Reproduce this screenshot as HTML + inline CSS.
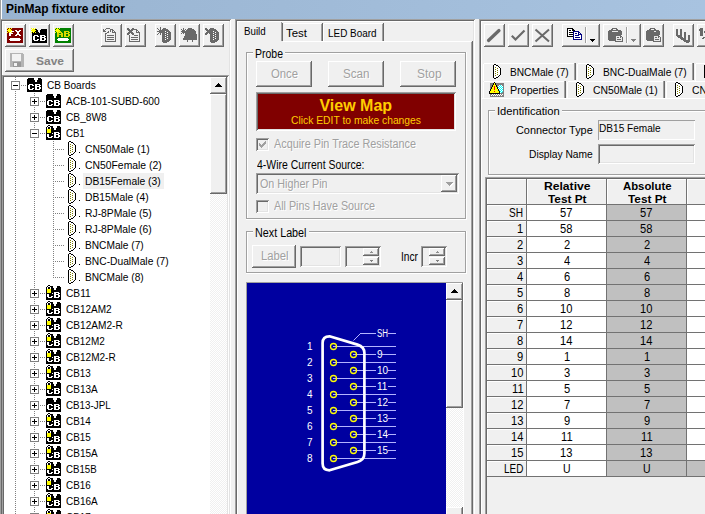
<!DOCTYPE html>
<html><head><meta charset="utf-8"><title>PinMap fixture editor</title><style>
html,body{margin:0;padding:0;}
body{width:705px;height:514px;overflow:hidden;background:#f0f0f0;position:relative;font-family:"Liberation Sans",sans-serif;font-size:11px;}
div,span,svg{position:absolute;box-sizing:border-box;}
.t{white-space:pre;line-height:1;color:#000;transform-origin:0 0;}
.sunk{box-shadow:inset 1px 1px 0 #a0a0a0, inset -1px -1px 0 #fff, inset 2px 2px 0 #696969, inset -2px -2px 0 #e3e3e3;}
.rais{box-shadow:inset -1px -1px 0 #696969, inset 1px 1px 0 #fff, inset -2px -2px 0 #a0a0a0, inset 2px 2px 0 #f0f0f0;}
.dis{color:#a0a0a0;text-shadow:1px 1px 0 #fff;}
</style></head><body>
<div style="left:0px;top:0px;width:705px;height:19px;background:linear-gradient(to right,#99b4d1,#a8c3e0);"></div>
<div style="left:0px;top:0px;width:1px;height:19px;background:#a0a0a0;"></div>
<div style="left:1px;top:0px;width:1px;height:19px;background:#fff;"></div>
<span class="t" style="top:3px;font-size:12px;font-weight:bold;transform:scaleX(0.9971);left:6px;">PinMap fixture editor</span>
<div class="sunk" style="left:0px;top:19px;width:231px;height:500px;"></div>
<div class="sunk" style="left:235px;top:19px;width:240px;height:500px;"></div>
<div class="sunk" style="left:479px;top:19px;width:240px;height:500px;"></div>
<div style="left:2px;top:21px;width:227px;height:1px;background:#fff;"></div>
<div style="left:2px;top:21px;width:1px;height:54px;background:#fff;"></div>
<div class="rais" style="left:5px;top:24px;width:21px;height:23px;"></div>
<div class="rais" style="left:29px;top:24px;width:21px;height:23px;"></div>
<div class="rais" style="left:53px;top:24px;width:21px;height:23px;"></div>
<div class="rais" style="left:101px;top:24px;width:21px;height:23px;"></div>
<div class="rais" style="left:125px;top:24px;width:21px;height:23px;"></div>
<div class="rais" style="left:155px;top:24px;width:21px;height:23px;"></div>
<div class="rais" style="left:179px;top:24px;width:21px;height:23px;"></div>
<div class="rais" style="left:203px;top:24px;width:21px;height:23px;"></div>
<div class="rais" style="left:5px;top:49px;width:69px;height:23px;"></div>
<span class="t" style="top:56px;font-size:11px;font-weight:bold;color:#838383;transform:scaleX(1.0899);left:36px;">Save</span>
<div class="sunk" style="left:2px;top:75px;width:227px;height:445px;background:#fff;"></div>
<div style="left:210px;top:77px;width:17px;height:440px;background:repeating-conic-gradient(#fff 0 25%,#f0f0f0 0 50%) 0 0/2px 2px;"></div>
<div class="rais" style="left:210px;top:77px;width:17px;height:17px;background:#f0f0f0;"></div>
<svg style="left:215px;top:83px;" width="7" height="4" viewBox="0 0 7 4" shape-rendering="crispEdges"><path d="M3 0h1v1h1v1h1v1h1v1h-7v-1h1v-1h1v-1h1z" fill="#000"/></svg>
<div class="rais" style="left:210px;top:94px;width:17px;height:100px;background:#f0f0f0;"></div>
<div style="left:15px;top:77px;width:1px;height:3px;background:repeating-linear-gradient(to bottom,#808080 0,#808080 1px,transparent 1px,transparent 2px);"></div>
<div style="left:15px;top:91px;width:1px;height:429px;background:repeating-linear-gradient(to bottom,#808080 0,#808080 1px,transparent 1px,transparent 2px);"></div>
<div style="left:34px;top:93px;width:1px;height:427px;background:repeating-linear-gradient(to bottom,#808080 0,#808080 1px,transparent 1px,transparent 2px);"></div>
<div style="left:53px;top:141px;width:1px;height:137px;background:repeating-linear-gradient(to bottom,#808080 0,#808080 1px,transparent 1px,transparent 2px);"></div>
<div style="left:21px;top:85px;width:5px;height:1px;background:repeating-linear-gradient(to right,#808080 0,#808080 1px,transparent 1px,transparent 2px);"></div>
<div style="left:11px;top:81px;width:9px;height:9px;background:#fff;border:1px solid #808080;"></div>
<div style="left:13px;top:85px;width:5px;height:1px;background:#000;"></div>
<svg style="left:27px;top:77px;" width="15" height="15" viewBox="0 0 15 15" shape-rendering="crispEdges"><path d="M1 1h6v1h-6zM11 1h3v1h-3zM0 2h7v1h-7zM11 2h4v1h-4zM0 3h8v1h-8zM10 3h5v1h-5zM0 4h8v1h-8zM10 4h5v1h-5zM0 5h15v1h-15zM0 6h15v1h-15zM0 7h2v1h-2zM6 7h2v1h-2zM13 7h2v1h-2zM0 8h1v1h-1zM3 8h2v1h-2zM7 8h1v1h-1zM10 8h2v1h-2zM14 8h1v1h-1zM0 9h1v1h-1zM3 9h5v1h-5zM13 9h2v1h-2zM0 10h1v1h-1zM3 10h5v1h-5zM10 10h2v1h-2zM14 10h1v1h-1zM0 11h1v1h-1zM3 11h2v1h-2zM7 11h1v1h-1zM10 11h2v1h-2zM14 11h1v1h-1zM0 12h2v1h-2zM6 12h2v1h-2zM13 12h2v1h-2zM0 13h15v1h-15zM0 14h15v1h-15z" fill="#000"/><path d="M2 7h4v1h-4zM8 7h5v1h-5zM1 8h2v1h-2zM5 8h2v1h-2zM8 8h2v1h-2zM12 8h2v1h-2zM1 9h2v1h-2zM8 9h5v1h-5zM1 10h2v1h-2zM8 10h2v1h-2zM12 10h2v1h-2zM1 11h2v1h-2zM5 11h2v1h-2zM8 11h2v1h-2zM12 11h2v1h-2zM2 12h4v1h-4zM8 12h5v1h-5z" fill="#fff"/></svg>
<span class="t" style="top:80px;font-size:11px;transform:scaleX(0.9156);left:47px;">CB Boards</span>
<div style="left:40px;top:101px;width:5px;height:1px;background:repeating-linear-gradient(to right,#808080 0,#808080 1px,transparent 1px,transparent 2px);"></div>
<div style="left:30px;top:97px;width:9px;height:9px;background:#fff;border:1px solid #808080;"></div>
<div style="left:32px;top:101px;width:5px;height:1px;background:#000;"></div>
<div style="left:34px;top:99px;width:1px;height:5px;background:#000;"></div>
<svg style="left:46px;top:93px;" width="15" height="15" viewBox="0 0 15 15" shape-rendering="crispEdges"><path d="M1 1h6v1h-6zM11 1h3v1h-3zM0 2h7v1h-7zM11 2h4v1h-4zM0 3h8v1h-8zM10 3h5v1h-5zM0 4h8v1h-8zM10 4h5v1h-5zM0 5h15v1h-15zM0 6h15v1h-15zM0 7h2v1h-2zM6 7h2v1h-2zM13 7h2v1h-2zM0 8h1v1h-1zM3 8h2v1h-2zM7 8h1v1h-1zM10 8h2v1h-2zM14 8h1v1h-1zM0 9h1v1h-1zM3 9h5v1h-5zM13 9h2v1h-2zM0 10h1v1h-1zM3 10h5v1h-5zM10 10h2v1h-2zM14 10h1v1h-1zM0 11h1v1h-1zM3 11h2v1h-2zM7 11h1v1h-1zM10 11h2v1h-2zM14 11h1v1h-1zM0 12h2v1h-2zM6 12h2v1h-2zM13 12h2v1h-2zM0 13h15v1h-15zM0 14h15v1h-15z" fill="#000"/><path d="M2 7h4v1h-4zM8 7h5v1h-5zM1 8h2v1h-2zM5 8h2v1h-2zM8 8h2v1h-2zM12 8h2v1h-2zM1 9h2v1h-2zM8 9h5v1h-5zM1 10h2v1h-2zM8 10h2v1h-2zM12 10h2v1h-2zM1 11h2v1h-2zM5 11h2v1h-2zM8 11h2v1h-2zM12 11h2v1h-2zM2 12h4v1h-4zM8 12h5v1h-5z" fill="#fff"/></svg>
<span class="t" style="top:96px;font-size:11px;transform:scaleX(0.9288);left:66px;">ACB-101-SUBD-600</span>
<div style="left:40px;top:117px;width:5px;height:1px;background:repeating-linear-gradient(to right,#808080 0,#808080 1px,transparent 1px,transparent 2px);"></div>
<div style="left:30px;top:113px;width:9px;height:9px;background:#fff;border:1px solid #808080;"></div>
<div style="left:32px;top:117px;width:5px;height:1px;background:#000;"></div>
<div style="left:34px;top:115px;width:1px;height:5px;background:#000;"></div>
<svg style="left:46px;top:109px;" width="15" height="15" viewBox="0 0 15 15" shape-rendering="crispEdges"><path d="M1 1h6v1h-6zM11 1h3v1h-3zM0 2h7v1h-7zM11 2h4v1h-4zM0 3h8v1h-8zM10 3h5v1h-5zM0 4h8v1h-8zM10 4h5v1h-5zM0 5h15v1h-15zM0 6h15v1h-15zM0 7h2v1h-2zM6 7h2v1h-2zM13 7h2v1h-2zM0 8h1v1h-1zM3 8h2v1h-2zM7 8h1v1h-1zM10 8h2v1h-2zM14 8h1v1h-1zM0 9h1v1h-1zM3 9h5v1h-5zM13 9h2v1h-2zM0 10h1v1h-1zM3 10h5v1h-5zM10 10h2v1h-2zM14 10h1v1h-1zM0 11h1v1h-1zM3 11h2v1h-2zM7 11h1v1h-1zM10 11h2v1h-2zM14 11h1v1h-1zM0 12h2v1h-2zM6 12h2v1h-2zM13 12h2v1h-2zM0 13h15v1h-15zM0 14h15v1h-15z" fill="#000"/><path d="M2 7h4v1h-4zM8 7h5v1h-5zM1 8h2v1h-2zM5 8h2v1h-2zM8 8h2v1h-2zM12 8h2v1h-2zM1 9h2v1h-2zM8 9h5v1h-5zM1 10h2v1h-2zM8 10h2v1h-2zM12 10h2v1h-2zM1 11h2v1h-2zM5 11h2v1h-2zM8 11h2v1h-2zM12 11h2v1h-2zM2 12h4v1h-4zM8 12h5v1h-5z" fill="#fff"/></svg>
<span class="t" style="top:112px;font-size:11px;transform:scaleX(0.9246);left:66px;">CB_8W8</span>
<div style="left:40px;top:133px;width:5px;height:1px;background:repeating-linear-gradient(to right,#808080 0,#808080 1px,transparent 1px,transparent 2px);"></div>
<div style="left:30px;top:129px;width:9px;height:9px;background:#fff;border:1px solid #808080;"></div>
<div style="left:32px;top:133px;width:5px;height:1px;background:#000;"></div>
<svg style="left:46px;top:125px;" width="15" height="15" viewBox="0 0 15 15" shape-rendering="crispEdges"><path d="M2 0h2v1h-2zM1 1h1v1h-1zM4 1h3v1h-3zM11 1h3v1h-3zM0 2h1v1h-1zM2 2h2v1h-2zM5 2h2v1h-2zM11 2h4v1h-4zM0 3h1v1h-1zM2 3h2v1h-2zM5 3h3v1h-3zM10 3h5v1h-5zM0 4h1v1h-1zM5 4h3v1h-3zM10 4h5v1h-5zM0 5h1v1h-1zM5 5h10v1h-10zM0 6h1v1h-1zM5 6h10v1h-10zM0 7h1v1h-1zM5 7h3v1h-3zM13 7h2v1h-2zM0 8h6v1h-6zM7 8h1v1h-1zM10 8h2v1h-2zM14 8h1v1h-1zM0 9h1v1h-1zM3 9h5v1h-5zM13 9h2v1h-2zM0 10h1v1h-1zM3 10h5v1h-5zM10 10h2v1h-2zM14 10h1v1h-1zM0 11h1v1h-1zM3 11h2v1h-2zM7 11h1v1h-1zM10 11h2v1h-2zM14 11h1v1h-1zM0 12h2v1h-2zM6 12h2v1h-2zM13 12h2v1h-2zM0 13h15v1h-15zM0 14h15v1h-15z" fill="#000"/><path d="M2 1h2v1h-2zM1 2h1v1h-1zM4 2h1v1h-1zM1 3h1v1h-1zM4 3h1v1h-1zM8 7h5v1h-5zM6 8h1v1h-1zM8 8h2v1h-2zM12 8h2v1h-2zM1 9h2v1h-2zM8 9h5v1h-5zM1 10h2v1h-2zM8 10h2v1h-2zM12 10h2v1h-2zM1 11h2v1h-2zM5 11h2v1h-2zM8 11h2v1h-2zM12 11h2v1h-2zM2 12h4v1h-4zM8 12h5v1h-5z" fill="#fff"/><path d="M1 4h4v1h-4zM1 5h4v1h-4zM1 6h4v1h-4zM1 7h4v1h-4z" fill="#ffff00"/></svg>
<span class="t" style="top:128px;font-size:11px;transform:scaleX(0.8739);left:66px;">CB1</span>
<div style="left:55px;top:149px;width:9px;height:1px;background:repeating-linear-gradient(to right,#808080 0,#808080 1px,transparent 1px,transparent 2px);"></div>
<svg style="left:68px;top:141px;" width="8" height="15" viewBox="0 0 8 15" shape-rendering="crispEdges"><path d="M1 0h2v1h-2zM0 1h1v1h-1zM3 1h2v1h-2zM0 2h1v1h-1zM5 2h1v1h-1zM0 3h1v1h-1zM6 3h1v1h-1zM0 4h1v1h-1zM7 4h1v1h-1zM0 5h1v1h-1zM7 5h1v1h-1zM0 6h1v1h-1zM7 6h1v1h-1zM0 7h1v1h-1zM7 7h1v1h-1zM0 8h1v1h-1zM7 8h1v1h-1zM0 9h1v1h-1zM7 9h1v1h-1zM0 10h1v1h-1zM7 10h1v1h-1zM0 11h1v1h-1zM6 11h1v1h-1zM0 12h1v1h-1zM5 12h1v1h-1zM0 13h1v1h-1zM3 13h2v1h-2zM1 14h2v1h-2z" fill="#000"/><path d="M1 1h2v1h-2zM1 2h4v1h-4zM1 3h1v1h-1zM3 3h3v1h-3zM1 4h3v1h-3zM5 4h2v1h-2zM1 5h1v1h-1zM3 5h4v1h-4zM1 6h3v1h-3zM5 6h2v1h-2zM1 7h1v1h-1zM3 7h4v1h-4zM1 8h3v1h-3zM5 8h2v1h-2zM1 9h1v1h-1zM3 9h4v1h-4zM1 10h3v1h-3zM5 10h2v1h-2zM1 11h1v1h-1zM3 11h3v1h-3zM1 12h4v1h-4zM1 13h2v1h-2z" fill="#fff"/><path d="M2 3h1v1h-1zM4 4h1v1h-1zM2 5h1v1h-1zM4 6h1v1h-1zM2 7h1v1h-1zM4 8h1v1h-1zM2 9h1v1h-1zM4 10h1v1h-1zM2 11h1v1h-1z" fill="#808000"/></svg>
<div style="left:79px;top:152px;width:1px;height:1px;background:#000;"></div>
<span class="t" style="top:144px;font-size:11px;transform:scaleX(0.9450);left:85px;">CN50Male (1)</span>
<div style="left:55px;top:165px;width:9px;height:1px;background:repeating-linear-gradient(to right,#808080 0,#808080 1px,transparent 1px,transparent 2px);"></div>
<svg style="left:68px;top:157px;" width="8" height="15" viewBox="0 0 8 15" shape-rendering="crispEdges"><path d="M1 0h2v1h-2zM0 1h1v1h-1zM3 1h2v1h-2zM0 2h1v1h-1zM5 2h1v1h-1zM0 3h1v1h-1zM6 3h1v1h-1zM0 4h1v1h-1zM7 4h1v1h-1zM0 5h1v1h-1zM7 5h1v1h-1zM0 6h1v1h-1zM7 6h1v1h-1zM0 7h1v1h-1zM7 7h1v1h-1zM0 8h1v1h-1zM7 8h1v1h-1zM0 9h1v1h-1zM7 9h1v1h-1zM0 10h1v1h-1zM7 10h1v1h-1zM0 11h1v1h-1zM6 11h1v1h-1zM0 12h1v1h-1zM5 12h1v1h-1zM0 13h1v1h-1zM3 13h2v1h-2zM1 14h2v1h-2z" fill="#000"/><path d="M1 1h2v1h-2zM1 2h4v1h-4zM1 3h1v1h-1zM3 3h3v1h-3zM1 4h3v1h-3zM5 4h2v1h-2zM1 5h1v1h-1zM3 5h4v1h-4zM1 6h3v1h-3zM5 6h2v1h-2zM1 7h1v1h-1zM3 7h4v1h-4zM1 8h3v1h-3zM5 8h2v1h-2zM1 9h1v1h-1zM3 9h4v1h-4zM1 10h3v1h-3zM5 10h2v1h-2zM1 11h1v1h-1zM3 11h3v1h-3zM1 12h4v1h-4zM1 13h2v1h-2z" fill="#fff"/><path d="M2 3h1v1h-1zM4 4h1v1h-1zM2 5h1v1h-1zM4 6h1v1h-1zM2 7h1v1h-1zM4 8h1v1h-1zM2 9h1v1h-1zM4 10h1v1h-1zM2 11h1v1h-1z" fill="#808000"/></svg>
<div style="left:79px;top:168px;width:1px;height:1px;background:#000;"></div>
<span class="t" style="top:160px;font-size:11px;transform:scaleX(0.9434);left:85px;">CN50Female (2)</span>
<div style="left:55px;top:181px;width:9px;height:1px;background:repeating-linear-gradient(to right,#808080 0,#808080 1px,transparent 1px,transparent 2px);"></div>
<svg style="left:68px;top:173px;" width="8" height="15" viewBox="0 0 8 15" shape-rendering="crispEdges"><path d="M1 0h2v1h-2zM0 1h1v1h-1zM3 1h2v1h-2zM0 2h1v1h-1zM5 2h1v1h-1zM0 3h1v1h-1zM6 3h1v1h-1zM0 4h1v1h-1zM7 4h1v1h-1zM0 5h1v1h-1zM7 5h1v1h-1zM0 6h1v1h-1zM7 6h1v1h-1zM0 7h1v1h-1zM7 7h1v1h-1zM0 8h1v1h-1zM7 8h1v1h-1zM0 9h1v1h-1zM7 9h1v1h-1zM0 10h1v1h-1zM7 10h1v1h-1zM0 11h1v1h-1zM6 11h1v1h-1zM0 12h1v1h-1zM5 12h1v1h-1zM0 13h1v1h-1zM3 13h2v1h-2zM1 14h2v1h-2z" fill="#000"/><path d="M1 1h2v1h-2zM1 2h4v1h-4zM1 3h1v1h-1zM3 3h3v1h-3zM1 4h3v1h-3zM5 4h2v1h-2zM1 5h1v1h-1zM3 5h4v1h-4zM1 6h3v1h-3zM5 6h2v1h-2zM1 7h1v1h-1zM3 7h4v1h-4zM1 8h3v1h-3zM5 8h2v1h-2zM1 9h1v1h-1zM3 9h4v1h-4zM1 10h3v1h-3zM5 10h2v1h-2zM1 11h1v1h-1zM3 11h3v1h-3zM1 12h4v1h-4zM1 13h2v1h-2z" fill="#fff"/><path d="M2 3h1v1h-1zM4 4h1v1h-1zM2 5h1v1h-1zM4 6h1v1h-1zM2 7h1v1h-1zM4 8h1v1h-1zM2 9h1v1h-1zM4 10h1v1h-1zM2 11h1v1h-1z" fill="#808000"/></svg>
<div style="left:79px;top:184px;width:1px;height:1px;background:#000;"></div>
<div style="left:83px;top:173px;width:81px;height:16px;background:#f0f0f0;"></div>
<span class="t" style="top:176px;font-size:11px;transform:scaleX(0.9381);left:85px;">DB15Female (3)</span>
<div style="left:55px;top:197px;width:9px;height:1px;background:repeating-linear-gradient(to right,#808080 0,#808080 1px,transparent 1px,transparent 2px);"></div>
<svg style="left:68px;top:189px;" width="8" height="15" viewBox="0 0 8 15" shape-rendering="crispEdges"><path d="M1 0h2v1h-2zM0 1h1v1h-1zM3 1h2v1h-2zM0 2h1v1h-1zM5 2h1v1h-1zM0 3h1v1h-1zM6 3h1v1h-1zM0 4h1v1h-1zM7 4h1v1h-1zM0 5h1v1h-1zM7 5h1v1h-1zM0 6h1v1h-1zM7 6h1v1h-1zM0 7h1v1h-1zM7 7h1v1h-1zM0 8h1v1h-1zM7 8h1v1h-1zM0 9h1v1h-1zM7 9h1v1h-1zM0 10h1v1h-1zM7 10h1v1h-1zM0 11h1v1h-1zM6 11h1v1h-1zM0 12h1v1h-1zM5 12h1v1h-1zM0 13h1v1h-1zM3 13h2v1h-2zM1 14h2v1h-2z" fill="#000"/><path d="M1 1h2v1h-2zM1 2h4v1h-4zM1 3h1v1h-1zM3 3h3v1h-3zM1 4h3v1h-3zM5 4h2v1h-2zM1 5h1v1h-1zM3 5h4v1h-4zM1 6h3v1h-3zM5 6h2v1h-2zM1 7h1v1h-1zM3 7h4v1h-4zM1 8h3v1h-3zM5 8h2v1h-2zM1 9h1v1h-1zM3 9h4v1h-4zM1 10h3v1h-3zM5 10h2v1h-2zM1 11h1v1h-1zM3 11h3v1h-3zM1 12h4v1h-4zM1 13h2v1h-2z" fill="#fff"/><path d="M2 3h1v1h-1zM4 4h1v1h-1zM2 5h1v1h-1zM4 6h1v1h-1zM2 7h1v1h-1zM4 8h1v1h-1zM2 9h1v1h-1zM4 10h1v1h-1zM2 11h1v1h-1z" fill="#808000"/></svg>
<div style="left:79px;top:200px;width:1px;height:1px;background:#000;"></div>
<span class="t" style="top:192px;font-size:11px;transform:scaleX(0.9387);left:85px;">DB15Male (4)</span>
<div style="left:55px;top:213px;width:9px;height:1px;background:repeating-linear-gradient(to right,#808080 0,#808080 1px,transparent 1px,transparent 2px);"></div>
<svg style="left:68px;top:205px;" width="8" height="15" viewBox="0 0 8 15" shape-rendering="crispEdges"><path d="M1 0h2v1h-2zM0 1h1v1h-1zM3 1h2v1h-2zM0 2h1v1h-1zM5 2h1v1h-1zM0 3h1v1h-1zM6 3h1v1h-1zM0 4h1v1h-1zM7 4h1v1h-1zM0 5h1v1h-1zM7 5h1v1h-1zM0 6h1v1h-1zM7 6h1v1h-1zM0 7h1v1h-1zM7 7h1v1h-1zM0 8h1v1h-1zM7 8h1v1h-1zM0 9h1v1h-1zM7 9h1v1h-1zM0 10h1v1h-1zM7 10h1v1h-1zM0 11h1v1h-1zM6 11h1v1h-1zM0 12h1v1h-1zM5 12h1v1h-1zM0 13h1v1h-1zM3 13h2v1h-2zM1 14h2v1h-2z" fill="#000"/><path d="M1 1h2v1h-2zM1 2h4v1h-4zM1 3h1v1h-1zM3 3h3v1h-3zM1 4h3v1h-3zM5 4h2v1h-2zM1 5h1v1h-1zM3 5h4v1h-4zM1 6h3v1h-3zM5 6h2v1h-2zM1 7h1v1h-1zM3 7h4v1h-4zM1 8h3v1h-3zM5 8h2v1h-2zM1 9h1v1h-1zM3 9h4v1h-4zM1 10h3v1h-3zM5 10h2v1h-2zM1 11h1v1h-1zM3 11h3v1h-3zM1 12h4v1h-4zM1 13h2v1h-2z" fill="#fff"/><path d="M2 3h1v1h-1zM4 4h1v1h-1zM2 5h1v1h-1zM4 6h1v1h-1zM2 7h1v1h-1zM4 8h1v1h-1zM2 9h1v1h-1zM4 10h1v1h-1zM2 11h1v1h-1z" fill="#808000"/></svg>
<div style="left:79px;top:216px;width:1px;height:1px;background:#000;"></div>
<span class="t" style="top:208px;font-size:11px;transform:scaleX(0.9407);left:85px;">RJ-8PMale (5)</span>
<div style="left:55px;top:229px;width:9px;height:1px;background:repeating-linear-gradient(to right,#808080 0,#808080 1px,transparent 1px,transparent 2px);"></div>
<svg style="left:68px;top:221px;" width="8" height="15" viewBox="0 0 8 15" shape-rendering="crispEdges"><path d="M1 0h2v1h-2zM0 1h1v1h-1zM3 1h2v1h-2zM0 2h1v1h-1zM5 2h1v1h-1zM0 3h1v1h-1zM6 3h1v1h-1zM0 4h1v1h-1zM7 4h1v1h-1zM0 5h1v1h-1zM7 5h1v1h-1zM0 6h1v1h-1zM7 6h1v1h-1zM0 7h1v1h-1zM7 7h1v1h-1zM0 8h1v1h-1zM7 8h1v1h-1zM0 9h1v1h-1zM7 9h1v1h-1zM0 10h1v1h-1zM7 10h1v1h-1zM0 11h1v1h-1zM6 11h1v1h-1zM0 12h1v1h-1zM5 12h1v1h-1zM0 13h1v1h-1zM3 13h2v1h-2zM1 14h2v1h-2z" fill="#000"/><path d="M1 1h2v1h-2zM1 2h4v1h-4zM1 3h1v1h-1zM3 3h3v1h-3zM1 4h3v1h-3zM5 4h2v1h-2zM1 5h1v1h-1zM3 5h4v1h-4zM1 6h3v1h-3zM5 6h2v1h-2zM1 7h1v1h-1zM3 7h4v1h-4zM1 8h3v1h-3zM5 8h2v1h-2zM1 9h1v1h-1zM3 9h4v1h-4zM1 10h3v1h-3zM5 10h2v1h-2zM1 11h1v1h-1zM3 11h3v1h-3zM1 12h4v1h-4zM1 13h2v1h-2z" fill="#fff"/><path d="M2 3h1v1h-1zM4 4h1v1h-1zM2 5h1v1h-1zM4 6h1v1h-1zM2 7h1v1h-1zM4 8h1v1h-1zM2 9h1v1h-1zM4 10h1v1h-1zM2 11h1v1h-1z" fill="#808000"/></svg>
<div style="left:79px;top:232px;width:1px;height:1px;background:#000;"></div>
<span class="t" style="top:224px;font-size:11px;transform:scaleX(0.9407);left:85px;">RJ-8PMale (6)</span>
<div style="left:55px;top:245px;width:9px;height:1px;background:repeating-linear-gradient(to right,#808080 0,#808080 1px,transparent 1px,transparent 2px);"></div>
<svg style="left:68px;top:237px;" width="8" height="15" viewBox="0 0 8 15" shape-rendering="crispEdges"><path d="M1 0h2v1h-2zM0 1h1v1h-1zM3 1h2v1h-2zM0 2h1v1h-1zM5 2h1v1h-1zM0 3h1v1h-1zM6 3h1v1h-1zM0 4h1v1h-1zM7 4h1v1h-1zM0 5h1v1h-1zM7 5h1v1h-1zM0 6h1v1h-1zM7 6h1v1h-1zM0 7h1v1h-1zM7 7h1v1h-1zM0 8h1v1h-1zM7 8h1v1h-1zM0 9h1v1h-1zM7 9h1v1h-1zM0 10h1v1h-1zM7 10h1v1h-1zM0 11h1v1h-1zM6 11h1v1h-1zM0 12h1v1h-1zM5 12h1v1h-1zM0 13h1v1h-1zM3 13h2v1h-2zM1 14h2v1h-2z" fill="#000"/><path d="M1 1h2v1h-2zM1 2h4v1h-4zM1 3h1v1h-1zM3 3h3v1h-3zM1 4h3v1h-3zM5 4h2v1h-2zM1 5h1v1h-1zM3 5h4v1h-4zM1 6h3v1h-3zM5 6h2v1h-2zM1 7h1v1h-1zM3 7h4v1h-4zM1 8h3v1h-3zM5 8h2v1h-2zM1 9h1v1h-1zM3 9h4v1h-4zM1 10h3v1h-3zM5 10h2v1h-2zM1 11h1v1h-1zM3 11h3v1h-3zM1 12h4v1h-4zM1 13h2v1h-2z" fill="#fff"/><path d="M2 3h1v1h-1zM4 4h1v1h-1zM2 5h1v1h-1zM4 6h1v1h-1zM2 7h1v1h-1zM4 8h1v1h-1zM2 9h1v1h-1zM4 10h1v1h-1zM2 11h1v1h-1z" fill="#808000"/></svg>
<div style="left:79px;top:248px;width:1px;height:1px;background:#000;"></div>
<span class="t" style="top:240px;font-size:11px;transform:scaleX(0.9234);left:85px;">BNCMale (7)</span>
<div style="left:55px;top:261px;width:9px;height:1px;background:repeating-linear-gradient(to right,#808080 0,#808080 1px,transparent 1px,transparent 2px);"></div>
<svg style="left:68px;top:253px;" width="8" height="15" viewBox="0 0 8 15" shape-rendering="crispEdges"><path d="M1 0h2v1h-2zM0 1h1v1h-1zM3 1h2v1h-2zM0 2h1v1h-1zM5 2h1v1h-1zM0 3h1v1h-1zM6 3h1v1h-1zM0 4h1v1h-1zM7 4h1v1h-1zM0 5h1v1h-1zM7 5h1v1h-1zM0 6h1v1h-1zM7 6h1v1h-1zM0 7h1v1h-1zM7 7h1v1h-1zM0 8h1v1h-1zM7 8h1v1h-1zM0 9h1v1h-1zM7 9h1v1h-1zM0 10h1v1h-1zM7 10h1v1h-1zM0 11h1v1h-1zM6 11h1v1h-1zM0 12h1v1h-1zM5 12h1v1h-1zM0 13h1v1h-1zM3 13h2v1h-2zM1 14h2v1h-2z" fill="#000"/><path d="M1 1h2v1h-2zM1 2h4v1h-4zM1 3h1v1h-1zM3 3h3v1h-3zM1 4h3v1h-3zM5 4h2v1h-2zM1 5h1v1h-1zM3 5h4v1h-4zM1 6h3v1h-3zM5 6h2v1h-2zM1 7h1v1h-1zM3 7h4v1h-4zM1 8h3v1h-3zM5 8h2v1h-2zM1 9h1v1h-1zM3 9h4v1h-4zM1 10h3v1h-3zM5 10h2v1h-2zM1 11h1v1h-1zM3 11h3v1h-3zM1 12h4v1h-4zM1 13h2v1h-2z" fill="#fff"/><path d="M2 3h1v1h-1zM4 4h1v1h-1zM2 5h1v1h-1zM4 6h1v1h-1zM2 7h1v1h-1zM4 8h1v1h-1zM2 9h1v1h-1zM4 10h1v1h-1zM2 11h1v1h-1z" fill="#808000"/></svg>
<div style="left:79px;top:264px;width:1px;height:1px;background:#000;"></div>
<span class="t" style="top:256px;font-size:11px;transform:scaleX(0.9315);left:85px;">BNC-DualMale (7)</span>
<div style="left:55px;top:277px;width:9px;height:1px;background:repeating-linear-gradient(to right,#808080 0,#808080 1px,transparent 1px,transparent 2px);"></div>
<svg style="left:68px;top:269px;" width="8" height="15" viewBox="0 0 8 15" shape-rendering="crispEdges"><path d="M1 0h2v1h-2zM0 1h1v1h-1zM3 1h2v1h-2zM0 2h1v1h-1zM5 2h1v1h-1zM0 3h1v1h-1zM6 3h1v1h-1zM0 4h1v1h-1zM7 4h1v1h-1zM0 5h1v1h-1zM7 5h1v1h-1zM0 6h1v1h-1zM7 6h1v1h-1zM0 7h1v1h-1zM7 7h1v1h-1zM0 8h1v1h-1zM7 8h1v1h-1zM0 9h1v1h-1zM7 9h1v1h-1zM0 10h1v1h-1zM7 10h1v1h-1zM0 11h1v1h-1zM6 11h1v1h-1zM0 12h1v1h-1zM5 12h1v1h-1zM0 13h1v1h-1zM3 13h2v1h-2zM1 14h2v1h-2z" fill="#000"/><path d="M1 1h2v1h-2zM1 2h4v1h-4zM1 3h1v1h-1zM3 3h3v1h-3zM1 4h3v1h-3zM5 4h2v1h-2zM1 5h1v1h-1zM3 5h4v1h-4zM1 6h3v1h-3zM5 6h2v1h-2zM1 7h1v1h-1zM3 7h4v1h-4zM1 8h3v1h-3zM5 8h2v1h-2zM1 9h1v1h-1zM3 9h4v1h-4zM1 10h3v1h-3zM5 10h2v1h-2zM1 11h1v1h-1zM3 11h3v1h-3zM1 12h4v1h-4zM1 13h2v1h-2z" fill="#fff"/><path d="M2 3h1v1h-1zM4 4h1v1h-1zM2 5h1v1h-1zM4 6h1v1h-1zM2 7h1v1h-1zM4 8h1v1h-1zM2 9h1v1h-1zM4 10h1v1h-1zM2 11h1v1h-1z" fill="#808000"/></svg>
<div style="left:79px;top:280px;width:1px;height:1px;background:#000;"></div>
<span class="t" style="top:272px;font-size:11px;transform:scaleX(0.9234);left:85px;">BNCMale (8)</span>
<div style="left:40px;top:293px;width:5px;height:1px;background:repeating-linear-gradient(to right,#808080 0,#808080 1px,transparent 1px,transparent 2px);"></div>
<div style="left:30px;top:289px;width:9px;height:9px;background:#fff;border:1px solid #808080;"></div>
<div style="left:32px;top:293px;width:5px;height:1px;background:#000;"></div>
<div style="left:34px;top:291px;width:1px;height:5px;background:#000;"></div>
<svg style="left:46px;top:285px;" width="15" height="15" viewBox="0 0 15 15" shape-rendering="crispEdges"><path d="M2 0h2v1h-2zM1 1h1v1h-1zM4 1h3v1h-3zM11 1h3v1h-3zM0 2h1v1h-1zM2 2h2v1h-2zM5 2h2v1h-2zM11 2h4v1h-4zM0 3h1v1h-1zM2 3h2v1h-2zM5 3h3v1h-3zM10 3h5v1h-5zM0 4h1v1h-1zM5 4h3v1h-3zM10 4h5v1h-5zM0 5h1v1h-1zM5 5h10v1h-10zM0 6h1v1h-1zM5 6h10v1h-10zM0 7h1v1h-1zM5 7h3v1h-3zM13 7h2v1h-2zM0 8h6v1h-6zM7 8h1v1h-1zM10 8h2v1h-2zM14 8h1v1h-1zM0 9h1v1h-1zM3 9h5v1h-5zM13 9h2v1h-2zM0 10h1v1h-1zM3 10h5v1h-5zM10 10h2v1h-2zM14 10h1v1h-1zM0 11h1v1h-1zM3 11h2v1h-2zM7 11h1v1h-1zM10 11h2v1h-2zM14 11h1v1h-1zM0 12h2v1h-2zM6 12h2v1h-2zM13 12h2v1h-2zM0 13h15v1h-15zM0 14h15v1h-15z" fill="#000"/><path d="M2 1h2v1h-2zM1 2h1v1h-1zM4 2h1v1h-1zM1 3h1v1h-1zM4 3h1v1h-1zM8 7h5v1h-5zM6 8h1v1h-1zM8 8h2v1h-2zM12 8h2v1h-2zM1 9h2v1h-2zM8 9h5v1h-5zM1 10h2v1h-2zM8 10h2v1h-2zM12 10h2v1h-2zM1 11h2v1h-2zM5 11h2v1h-2zM8 11h2v1h-2zM12 11h2v1h-2zM2 12h4v1h-4zM8 12h5v1h-5z" fill="#fff"/><path d="M1 4h4v1h-4zM1 5h4v1h-4zM1 6h4v1h-4zM1 7h4v1h-4z" fill="#ffff00"/></svg>
<span class="t" style="top:288px;font-size:11px;transform:scaleX(0.9251);left:66px;">CB11</span>
<div style="left:40px;top:309px;width:5px;height:1px;background:repeating-linear-gradient(to right,#808080 0,#808080 1px,transparent 1px,transparent 2px);"></div>
<div style="left:30px;top:305px;width:9px;height:9px;background:#fff;border:1px solid #808080;"></div>
<div style="left:32px;top:309px;width:5px;height:1px;background:#000;"></div>
<div style="left:34px;top:307px;width:1px;height:5px;background:#000;"></div>
<svg style="left:46px;top:301px;" width="15" height="15" viewBox="0 0 15 15" shape-rendering="crispEdges"><path d="M2 0h2v1h-2zM1 1h1v1h-1zM4 1h3v1h-3zM11 1h3v1h-3zM0 2h1v1h-1zM2 2h2v1h-2zM5 2h2v1h-2zM11 2h4v1h-4zM0 3h1v1h-1zM2 3h2v1h-2zM5 3h3v1h-3zM10 3h5v1h-5zM0 4h1v1h-1zM5 4h3v1h-3zM10 4h5v1h-5zM0 5h1v1h-1zM5 5h10v1h-10zM0 6h1v1h-1zM5 6h10v1h-10zM0 7h1v1h-1zM5 7h3v1h-3zM13 7h2v1h-2zM0 8h6v1h-6zM7 8h1v1h-1zM10 8h2v1h-2zM14 8h1v1h-1zM0 9h1v1h-1zM3 9h5v1h-5zM13 9h2v1h-2zM0 10h1v1h-1zM3 10h5v1h-5zM10 10h2v1h-2zM14 10h1v1h-1zM0 11h1v1h-1zM3 11h2v1h-2zM7 11h1v1h-1zM10 11h2v1h-2zM14 11h1v1h-1zM0 12h2v1h-2zM6 12h2v1h-2zM13 12h2v1h-2zM0 13h15v1h-15zM0 14h15v1h-15z" fill="#000"/><path d="M2 1h2v1h-2zM1 2h1v1h-1zM4 2h1v1h-1zM1 3h1v1h-1zM4 3h1v1h-1zM8 7h5v1h-5zM6 8h1v1h-1zM8 8h2v1h-2zM12 8h2v1h-2zM1 9h2v1h-2zM8 9h5v1h-5zM1 10h2v1h-2zM8 10h2v1h-2zM12 10h2v1h-2zM1 11h2v1h-2zM5 11h2v1h-2zM8 11h2v1h-2zM12 11h2v1h-2zM2 12h4v1h-4zM8 12h5v1h-5z" fill="#fff"/><path d="M1 4h4v1h-4zM1 5h4v1h-4zM1 6h4v1h-4zM1 7h4v1h-4z" fill="#ffff00"/></svg>
<span class="t" style="top:304px;font-size:11px;transform:scaleX(0.9115);left:66px;">CB12AM2</span>
<div style="left:40px;top:325px;width:5px;height:1px;background:repeating-linear-gradient(to right,#808080 0,#808080 1px,transparent 1px,transparent 2px);"></div>
<div style="left:30px;top:321px;width:9px;height:9px;background:#fff;border:1px solid #808080;"></div>
<div style="left:32px;top:325px;width:5px;height:1px;background:#000;"></div>
<div style="left:34px;top:323px;width:1px;height:5px;background:#000;"></div>
<svg style="left:46px;top:317px;" width="15" height="15" viewBox="0 0 15 15" shape-rendering="crispEdges"><path d="M2 0h2v1h-2zM1 1h1v1h-1zM4 1h3v1h-3zM11 1h3v1h-3zM0 2h1v1h-1zM2 2h2v1h-2zM5 2h2v1h-2zM11 2h4v1h-4zM0 3h1v1h-1zM2 3h2v1h-2zM5 3h3v1h-3zM10 3h5v1h-5zM0 4h1v1h-1zM5 4h3v1h-3zM10 4h5v1h-5zM0 5h1v1h-1zM5 5h10v1h-10zM0 6h1v1h-1zM5 6h10v1h-10zM0 7h1v1h-1zM5 7h3v1h-3zM13 7h2v1h-2zM0 8h6v1h-6zM7 8h1v1h-1zM10 8h2v1h-2zM14 8h1v1h-1zM0 9h1v1h-1zM3 9h5v1h-5zM13 9h2v1h-2zM0 10h1v1h-1zM3 10h5v1h-5zM10 10h2v1h-2zM14 10h1v1h-1zM0 11h1v1h-1zM3 11h2v1h-2zM7 11h1v1h-1zM10 11h2v1h-2zM14 11h1v1h-1zM0 12h2v1h-2zM6 12h2v1h-2zM13 12h2v1h-2zM0 13h15v1h-15zM0 14h15v1h-15z" fill="#000"/><path d="M2 1h2v1h-2zM1 2h1v1h-1zM4 2h1v1h-1zM1 3h1v1h-1zM4 3h1v1h-1zM8 7h5v1h-5zM6 8h1v1h-1zM8 8h2v1h-2zM12 8h2v1h-2zM1 9h2v1h-2zM8 9h5v1h-5zM1 10h2v1h-2zM8 10h2v1h-2zM12 10h2v1h-2zM1 11h2v1h-2zM5 11h2v1h-2zM8 11h2v1h-2zM12 11h2v1h-2zM2 12h4v1h-4zM8 12h5v1h-5z" fill="#fff"/><path d="M1 4h4v1h-4zM1 5h4v1h-4zM1 6h4v1h-4zM1 7h4v1h-4z" fill="#ffff00"/></svg>
<span class="t" style="top:320px;font-size:11px;transform:scaleX(0.9183);left:66px;">CB12AM2-R</span>
<div style="left:40px;top:341px;width:5px;height:1px;background:repeating-linear-gradient(to right,#808080 0,#808080 1px,transparent 1px,transparent 2px);"></div>
<div style="left:30px;top:337px;width:9px;height:9px;background:#fff;border:1px solid #808080;"></div>
<div style="left:32px;top:341px;width:5px;height:1px;background:#000;"></div>
<div style="left:34px;top:339px;width:1px;height:5px;background:#000;"></div>
<svg style="left:46px;top:333px;" width="15" height="15" viewBox="0 0 15 15" shape-rendering="crispEdges"><path d="M2 0h2v1h-2zM1 1h1v1h-1zM4 1h3v1h-3zM11 1h3v1h-3zM0 2h1v1h-1zM2 2h2v1h-2zM5 2h2v1h-2zM11 2h4v1h-4zM0 3h1v1h-1zM2 3h2v1h-2zM5 3h3v1h-3zM10 3h5v1h-5zM0 4h1v1h-1zM5 4h3v1h-3zM10 4h5v1h-5zM0 5h1v1h-1zM5 5h10v1h-10zM0 6h1v1h-1zM5 6h10v1h-10zM0 7h1v1h-1zM5 7h3v1h-3zM13 7h2v1h-2zM0 8h6v1h-6zM7 8h1v1h-1zM10 8h2v1h-2zM14 8h1v1h-1zM0 9h1v1h-1zM3 9h5v1h-5zM13 9h2v1h-2zM0 10h1v1h-1zM3 10h5v1h-5zM10 10h2v1h-2zM14 10h1v1h-1zM0 11h1v1h-1zM3 11h2v1h-2zM7 11h1v1h-1zM10 11h2v1h-2zM14 11h1v1h-1zM0 12h2v1h-2zM6 12h2v1h-2zM13 12h2v1h-2zM0 13h15v1h-15zM0 14h15v1h-15z" fill="#000"/><path d="M2 1h2v1h-2zM1 2h1v1h-1zM4 2h1v1h-1zM1 3h1v1h-1zM4 3h1v1h-1zM8 7h5v1h-5zM6 8h1v1h-1zM8 8h2v1h-2zM12 8h2v1h-2zM1 9h2v1h-2zM8 9h5v1h-5zM1 10h2v1h-2zM8 10h2v1h-2zM12 10h2v1h-2zM1 11h2v1h-2zM5 11h2v1h-2zM8 11h2v1h-2zM12 11h2v1h-2zM2 12h4v1h-4zM8 12h5v1h-5z" fill="#fff"/><path d="M1 4h4v1h-4zM1 5h4v1h-4zM1 6h4v1h-4zM1 7h4v1h-4z" fill="#ffff00"/></svg>
<span class="t" style="top:336px;font-size:11px;transform:scaleX(0.9042);left:66px;">CB12M2</span>
<div style="left:40px;top:357px;width:5px;height:1px;background:repeating-linear-gradient(to right,#808080 0,#808080 1px,transparent 1px,transparent 2px);"></div>
<div style="left:30px;top:353px;width:9px;height:9px;background:#fff;border:1px solid #808080;"></div>
<div style="left:32px;top:357px;width:5px;height:1px;background:#000;"></div>
<div style="left:34px;top:355px;width:1px;height:5px;background:#000;"></div>
<svg style="left:46px;top:349px;" width="15" height="15" viewBox="0 0 15 15" shape-rendering="crispEdges"><path d="M2 0h2v1h-2zM1 1h1v1h-1zM4 1h3v1h-3zM11 1h3v1h-3zM0 2h1v1h-1zM2 2h2v1h-2zM5 2h2v1h-2zM11 2h4v1h-4zM0 3h1v1h-1zM2 3h2v1h-2zM5 3h3v1h-3zM10 3h5v1h-5zM0 4h1v1h-1zM5 4h3v1h-3zM10 4h5v1h-5zM0 5h1v1h-1zM5 5h10v1h-10zM0 6h1v1h-1zM5 6h10v1h-10zM0 7h1v1h-1zM5 7h3v1h-3zM13 7h2v1h-2zM0 8h6v1h-6zM7 8h1v1h-1zM10 8h2v1h-2zM14 8h1v1h-1zM0 9h1v1h-1zM3 9h5v1h-5zM13 9h2v1h-2zM0 10h1v1h-1zM3 10h5v1h-5zM10 10h2v1h-2zM14 10h1v1h-1zM0 11h1v1h-1zM3 11h2v1h-2zM7 11h1v1h-1zM10 11h2v1h-2zM14 11h1v1h-1zM0 12h2v1h-2zM6 12h2v1h-2zM13 12h2v1h-2zM0 13h15v1h-15zM0 14h15v1h-15z" fill="#000"/><path d="M2 1h2v1h-2zM1 2h1v1h-1zM4 2h1v1h-1zM1 3h1v1h-1zM4 3h1v1h-1zM8 7h5v1h-5zM6 8h1v1h-1zM8 8h2v1h-2zM12 8h2v1h-2zM1 9h2v1h-2zM8 9h5v1h-5zM1 10h2v1h-2zM8 10h2v1h-2zM12 10h2v1h-2zM1 11h2v1h-2zM5 11h2v1h-2zM8 11h2v1h-2zM12 11h2v1h-2zM2 12h4v1h-4zM8 12h5v1h-5z" fill="#fff"/><path d="M1 4h4v1h-4zM1 5h4v1h-4zM1 6h4v1h-4zM1 7h4v1h-4z" fill="#ffff00"/></svg>
<span class="t" style="top:352px;font-size:11px;transform:scaleX(0.9135);left:66px;">CB12M2-R</span>
<div style="left:40px;top:373px;width:5px;height:1px;background:repeating-linear-gradient(to right,#808080 0,#808080 1px,transparent 1px,transparent 2px);"></div>
<div style="left:30px;top:369px;width:9px;height:9px;background:#fff;border:1px solid #808080;"></div>
<div style="left:32px;top:373px;width:5px;height:1px;background:#000;"></div>
<div style="left:34px;top:371px;width:1px;height:5px;background:#000;"></div>
<svg style="left:46px;top:365px;" width="15" height="15" viewBox="0 0 15 15" shape-rendering="crispEdges"><path d="M2 0h2v1h-2zM1 1h1v1h-1zM4 1h3v1h-3zM11 1h3v1h-3zM0 2h1v1h-1zM2 2h2v1h-2zM5 2h2v1h-2zM11 2h4v1h-4zM0 3h1v1h-1zM2 3h2v1h-2zM5 3h3v1h-3zM10 3h5v1h-5zM0 4h1v1h-1zM5 4h3v1h-3zM10 4h5v1h-5zM0 5h1v1h-1zM5 5h10v1h-10zM0 6h1v1h-1zM5 6h10v1h-10zM0 7h1v1h-1zM5 7h3v1h-3zM13 7h2v1h-2zM0 8h6v1h-6zM7 8h1v1h-1zM10 8h2v1h-2zM14 8h1v1h-1zM0 9h1v1h-1zM3 9h5v1h-5zM13 9h2v1h-2zM0 10h1v1h-1zM3 10h5v1h-5zM10 10h2v1h-2zM14 10h1v1h-1zM0 11h1v1h-1zM3 11h2v1h-2zM7 11h1v1h-1zM10 11h2v1h-2zM14 11h1v1h-1zM0 12h2v1h-2zM6 12h2v1h-2zM13 12h2v1h-2zM0 13h15v1h-15zM0 14h15v1h-15z" fill="#000"/><path d="M2 1h2v1h-2zM1 2h1v1h-1zM4 2h1v1h-1zM1 3h1v1h-1zM4 3h1v1h-1zM8 7h5v1h-5zM6 8h1v1h-1zM8 8h2v1h-2zM12 8h2v1h-2zM1 9h2v1h-2zM8 9h5v1h-5zM1 10h2v1h-2zM8 10h2v1h-2zM12 10h2v1h-2zM1 11h2v1h-2zM5 11h2v1h-2zM8 11h2v1h-2zM12 11h2v1h-2zM2 12h4v1h-4zM8 12h5v1h-5z" fill="#fff"/><path d="M1 4h4v1h-4zM1 5h4v1h-4zM1 6h4v1h-4zM1 7h4v1h-4z" fill="#ffff00"/></svg>
<span class="t" style="top:368px;font-size:11px;transform:scaleX(0.8976);left:66px;">CB13</span>
<div style="left:40px;top:389px;width:5px;height:1px;background:repeating-linear-gradient(to right,#808080 0,#808080 1px,transparent 1px,transparent 2px);"></div>
<div style="left:30px;top:385px;width:9px;height:9px;background:#fff;border:1px solid #808080;"></div>
<div style="left:32px;top:389px;width:5px;height:1px;background:#000;"></div>
<div style="left:34px;top:387px;width:1px;height:5px;background:#000;"></div>
<svg style="left:46px;top:381px;" width="15" height="15" viewBox="0 0 15 15" shape-rendering="crispEdges"><path d="M2 0h2v1h-2zM1 1h1v1h-1zM4 1h3v1h-3zM11 1h3v1h-3zM0 2h1v1h-1zM2 2h2v1h-2zM5 2h2v1h-2zM11 2h4v1h-4zM0 3h1v1h-1zM2 3h2v1h-2zM5 3h3v1h-3zM10 3h5v1h-5zM0 4h1v1h-1zM5 4h3v1h-3zM10 4h5v1h-5zM0 5h1v1h-1zM5 5h10v1h-10zM0 6h1v1h-1zM5 6h10v1h-10zM0 7h1v1h-1zM5 7h3v1h-3zM13 7h2v1h-2zM0 8h6v1h-6zM7 8h1v1h-1zM10 8h2v1h-2zM14 8h1v1h-1zM0 9h1v1h-1zM3 9h5v1h-5zM13 9h2v1h-2zM0 10h1v1h-1zM3 10h5v1h-5zM10 10h2v1h-2zM14 10h1v1h-1zM0 11h1v1h-1zM3 11h2v1h-2zM7 11h1v1h-1zM10 11h2v1h-2zM14 11h1v1h-1zM0 12h2v1h-2zM6 12h2v1h-2zM13 12h2v1h-2zM0 13h15v1h-15zM0 14h15v1h-15z" fill="#000"/><path d="M2 1h2v1h-2zM1 2h1v1h-1zM4 2h1v1h-1zM1 3h1v1h-1zM4 3h1v1h-1zM8 7h5v1h-5zM6 8h1v1h-1zM8 8h2v1h-2zM12 8h2v1h-2zM1 9h2v1h-2zM8 9h5v1h-5zM1 10h2v1h-2zM8 10h2v1h-2zM12 10h2v1h-2zM1 11h2v1h-2zM5 11h2v1h-2zM8 11h2v1h-2zM12 11h2v1h-2zM2 12h4v1h-4zM8 12h5v1h-5z" fill="#fff"/><path d="M1 4h4v1h-4zM1 5h4v1h-4zM1 6h4v1h-4zM1 7h4v1h-4z" fill="#ffff00"/></svg>
<span class="t" style="top:384px;font-size:11px;transform:scaleX(0.9095);left:66px;">CB13A</span>
<div style="left:40px;top:405px;width:5px;height:1px;background:repeating-linear-gradient(to right,#808080 0,#808080 1px,transparent 1px,transparent 2px);"></div>
<div style="left:30px;top:401px;width:9px;height:9px;background:#fff;border:1px solid #808080;"></div>
<div style="left:32px;top:405px;width:5px;height:1px;background:#000;"></div>
<div style="left:34px;top:403px;width:1px;height:5px;background:#000;"></div>
<svg style="left:46px;top:397px;" width="15" height="15" viewBox="0 0 15 15" shape-rendering="crispEdges"><path d="M1 1h6v1h-6zM11 1h3v1h-3zM0 2h7v1h-7zM11 2h4v1h-4zM0 3h8v1h-8zM10 3h5v1h-5zM0 4h8v1h-8zM10 4h5v1h-5zM0 5h15v1h-15zM0 6h15v1h-15zM0 7h2v1h-2zM6 7h2v1h-2zM13 7h2v1h-2zM0 8h1v1h-1zM3 8h2v1h-2zM7 8h1v1h-1zM10 8h2v1h-2zM14 8h1v1h-1zM0 9h1v1h-1zM3 9h5v1h-5zM13 9h2v1h-2zM0 10h1v1h-1zM3 10h5v1h-5zM10 10h2v1h-2zM14 10h1v1h-1zM0 11h1v1h-1zM3 11h2v1h-2zM7 11h1v1h-1zM10 11h2v1h-2zM14 11h1v1h-1zM0 12h2v1h-2zM6 12h2v1h-2zM13 12h2v1h-2zM0 13h15v1h-15zM0 14h15v1h-15z" fill="#000"/><path d="M2 7h4v1h-4zM8 7h5v1h-5zM1 8h2v1h-2zM5 8h2v1h-2zM8 8h2v1h-2zM12 8h2v1h-2zM1 9h2v1h-2zM8 9h5v1h-5zM1 10h2v1h-2zM8 10h2v1h-2zM12 10h2v1h-2zM1 11h2v1h-2zM5 11h2v1h-2zM8 11h2v1h-2zM12 11h2v1h-2zM2 12h4v1h-4zM8 12h5v1h-5z" fill="#fff"/></svg>
<span class="t" style="top:400px;font-size:11px;transform:scaleX(0.8916);left:66px;">CB13-JPL</span>
<div style="left:40px;top:421px;width:5px;height:1px;background:repeating-linear-gradient(to right,#808080 0,#808080 1px,transparent 1px,transparent 2px);"></div>
<div style="left:30px;top:417px;width:9px;height:9px;background:#fff;border:1px solid #808080;"></div>
<div style="left:32px;top:421px;width:5px;height:1px;background:#000;"></div>
<div style="left:34px;top:419px;width:1px;height:5px;background:#000;"></div>
<svg style="left:46px;top:413px;" width="15" height="15" viewBox="0 0 15 15" shape-rendering="crispEdges"><path d="M2 0h2v1h-2zM1 1h1v1h-1zM4 1h3v1h-3zM11 1h3v1h-3zM0 2h1v1h-1zM2 2h2v1h-2zM5 2h2v1h-2zM11 2h4v1h-4zM0 3h1v1h-1zM2 3h2v1h-2zM5 3h3v1h-3zM10 3h5v1h-5zM0 4h1v1h-1zM5 4h3v1h-3zM10 4h5v1h-5zM0 5h1v1h-1zM5 5h10v1h-10zM0 6h1v1h-1zM5 6h10v1h-10zM0 7h1v1h-1zM5 7h3v1h-3zM13 7h2v1h-2zM0 8h6v1h-6zM7 8h1v1h-1zM10 8h2v1h-2zM14 8h1v1h-1zM0 9h1v1h-1zM3 9h5v1h-5zM13 9h2v1h-2zM0 10h1v1h-1zM3 10h5v1h-5zM10 10h2v1h-2zM14 10h1v1h-1zM0 11h1v1h-1zM3 11h2v1h-2zM7 11h1v1h-1zM10 11h2v1h-2zM14 11h1v1h-1zM0 12h2v1h-2zM6 12h2v1h-2zM13 12h2v1h-2zM0 13h15v1h-15zM0 14h15v1h-15z" fill="#000"/><path d="M2 1h2v1h-2zM1 2h1v1h-1zM4 2h1v1h-1zM1 3h1v1h-1zM4 3h1v1h-1zM8 7h5v1h-5zM6 8h1v1h-1zM8 8h2v1h-2zM12 8h2v1h-2zM1 9h2v1h-2zM8 9h5v1h-5zM1 10h2v1h-2zM8 10h2v1h-2zM12 10h2v1h-2zM1 11h2v1h-2zM5 11h2v1h-2zM8 11h2v1h-2zM12 11h2v1h-2zM2 12h4v1h-4zM8 12h5v1h-5z" fill="#fff"/><path d="M1 4h4v1h-4zM1 5h4v1h-4zM1 6h4v1h-4zM1 7h4v1h-4z" fill="#ffff00"/></svg>
<span class="t" style="top:416px;font-size:11px;transform:scaleX(0.8976);left:66px;">CB14</span>
<div style="left:40px;top:437px;width:5px;height:1px;background:repeating-linear-gradient(to right,#808080 0,#808080 1px,transparent 1px,transparent 2px);"></div>
<div style="left:30px;top:433px;width:9px;height:9px;background:#fff;border:1px solid #808080;"></div>
<div style="left:32px;top:437px;width:5px;height:1px;background:#000;"></div>
<div style="left:34px;top:435px;width:1px;height:5px;background:#000;"></div>
<svg style="left:46px;top:429px;" width="15" height="15" viewBox="0 0 15 15" shape-rendering="crispEdges"><path d="M2 0h2v1h-2zM1 1h1v1h-1zM4 1h3v1h-3zM11 1h3v1h-3zM0 2h1v1h-1zM2 2h2v1h-2zM5 2h2v1h-2zM11 2h4v1h-4zM0 3h1v1h-1zM2 3h2v1h-2zM5 3h3v1h-3zM10 3h5v1h-5zM0 4h1v1h-1zM5 4h3v1h-3zM10 4h5v1h-5zM0 5h1v1h-1zM5 5h10v1h-10zM0 6h1v1h-1zM5 6h10v1h-10zM0 7h1v1h-1zM5 7h3v1h-3zM13 7h2v1h-2zM0 8h6v1h-6zM7 8h1v1h-1zM10 8h2v1h-2zM14 8h1v1h-1zM0 9h1v1h-1zM3 9h5v1h-5zM13 9h2v1h-2zM0 10h1v1h-1zM3 10h5v1h-5zM10 10h2v1h-2zM14 10h1v1h-1zM0 11h1v1h-1zM3 11h2v1h-2zM7 11h1v1h-1zM10 11h2v1h-2zM14 11h1v1h-1zM0 12h2v1h-2zM6 12h2v1h-2zM13 12h2v1h-2zM0 13h15v1h-15zM0 14h15v1h-15z" fill="#000"/><path d="M2 1h2v1h-2zM1 2h1v1h-1zM4 2h1v1h-1zM1 3h1v1h-1zM4 3h1v1h-1zM8 7h5v1h-5zM6 8h1v1h-1zM8 8h2v1h-2zM12 8h2v1h-2zM1 9h2v1h-2zM8 9h5v1h-5zM1 10h2v1h-2zM8 10h2v1h-2zM12 10h2v1h-2zM1 11h2v1h-2zM5 11h2v1h-2zM8 11h2v1h-2zM12 11h2v1h-2zM2 12h4v1h-4zM8 12h5v1h-5z" fill="#fff"/><path d="M1 4h4v1h-4zM1 5h4v1h-4zM1 6h4v1h-4zM1 7h4v1h-4z" fill="#ffff00"/></svg>
<span class="t" style="top:432px;font-size:11px;transform:scaleX(0.8976);left:66px;">CB15</span>
<div style="left:40px;top:453px;width:5px;height:1px;background:repeating-linear-gradient(to right,#808080 0,#808080 1px,transparent 1px,transparent 2px);"></div>
<div style="left:30px;top:449px;width:9px;height:9px;background:#fff;border:1px solid #808080;"></div>
<div style="left:32px;top:453px;width:5px;height:1px;background:#000;"></div>
<div style="left:34px;top:451px;width:1px;height:5px;background:#000;"></div>
<svg style="left:46px;top:445px;" width="15" height="15" viewBox="0 0 15 15" shape-rendering="crispEdges"><path d="M2 0h2v1h-2zM1 1h1v1h-1zM4 1h3v1h-3zM11 1h3v1h-3zM0 2h1v1h-1zM2 2h2v1h-2zM5 2h2v1h-2zM11 2h4v1h-4zM0 3h1v1h-1zM2 3h2v1h-2zM5 3h3v1h-3zM10 3h5v1h-5zM0 4h1v1h-1zM5 4h3v1h-3zM10 4h5v1h-5zM0 5h1v1h-1zM5 5h10v1h-10zM0 6h1v1h-1zM5 6h10v1h-10zM0 7h1v1h-1zM5 7h3v1h-3zM13 7h2v1h-2zM0 8h6v1h-6zM7 8h1v1h-1zM10 8h2v1h-2zM14 8h1v1h-1zM0 9h1v1h-1zM3 9h5v1h-5zM13 9h2v1h-2zM0 10h1v1h-1zM3 10h5v1h-5zM10 10h2v1h-2zM14 10h1v1h-1zM0 11h1v1h-1zM3 11h2v1h-2zM7 11h1v1h-1zM10 11h2v1h-2zM14 11h1v1h-1zM0 12h2v1h-2zM6 12h2v1h-2zM13 12h2v1h-2zM0 13h15v1h-15zM0 14h15v1h-15z" fill="#000"/><path d="M2 1h2v1h-2zM1 2h1v1h-1zM4 2h1v1h-1zM1 3h1v1h-1zM4 3h1v1h-1zM8 7h5v1h-5zM6 8h1v1h-1zM8 8h2v1h-2zM12 8h2v1h-2zM1 9h2v1h-2zM8 9h5v1h-5zM1 10h2v1h-2zM8 10h2v1h-2zM12 10h2v1h-2zM1 11h2v1h-2zM5 11h2v1h-2zM8 11h2v1h-2zM12 11h2v1h-2zM2 12h4v1h-4zM8 12h5v1h-5z" fill="#fff"/><path d="M1 4h4v1h-4zM1 5h4v1h-4zM1 6h4v1h-4zM1 7h4v1h-4z" fill="#ffff00"/></svg>
<span class="t" style="top:448px;font-size:11px;transform:scaleX(0.9095);left:66px;">CB15A</span>
<div style="left:40px;top:469px;width:5px;height:1px;background:repeating-linear-gradient(to right,#808080 0,#808080 1px,transparent 1px,transparent 2px);"></div>
<div style="left:30px;top:465px;width:9px;height:9px;background:#fff;border:1px solid #808080;"></div>
<div style="left:32px;top:469px;width:5px;height:1px;background:#000;"></div>
<div style="left:34px;top:467px;width:1px;height:5px;background:#000;"></div>
<svg style="left:46px;top:461px;" width="15" height="15" viewBox="0 0 15 15" shape-rendering="crispEdges"><path d="M2 0h2v1h-2zM1 1h1v1h-1zM4 1h3v1h-3zM11 1h3v1h-3zM0 2h1v1h-1zM2 2h2v1h-2zM5 2h2v1h-2zM11 2h4v1h-4zM0 3h1v1h-1zM2 3h2v1h-2zM5 3h3v1h-3zM10 3h5v1h-5zM0 4h1v1h-1zM5 4h3v1h-3zM10 4h5v1h-5zM0 5h1v1h-1zM5 5h10v1h-10zM0 6h1v1h-1zM5 6h10v1h-10zM0 7h1v1h-1zM5 7h3v1h-3zM13 7h2v1h-2zM0 8h6v1h-6zM7 8h1v1h-1zM10 8h2v1h-2zM14 8h1v1h-1zM0 9h1v1h-1zM3 9h5v1h-5zM13 9h2v1h-2zM0 10h1v1h-1zM3 10h5v1h-5zM10 10h2v1h-2zM14 10h1v1h-1zM0 11h1v1h-1zM3 11h2v1h-2zM7 11h1v1h-1zM10 11h2v1h-2zM14 11h1v1h-1zM0 12h2v1h-2zM6 12h2v1h-2zM13 12h2v1h-2zM0 13h15v1h-15zM0 14h15v1h-15z" fill="#000"/><path d="M2 1h2v1h-2zM1 2h1v1h-1zM4 2h1v1h-1zM1 3h1v1h-1zM4 3h1v1h-1zM8 7h5v1h-5zM6 8h1v1h-1zM8 8h2v1h-2zM12 8h2v1h-2zM1 9h2v1h-2zM8 9h5v1h-5zM1 10h2v1h-2zM8 10h2v1h-2zM12 10h2v1h-2zM1 11h2v1h-2zM5 11h2v1h-2zM8 11h2v1h-2zM12 11h2v1h-2zM2 12h4v1h-4zM8 12h5v1h-5z" fill="#fff"/><path d="M1 4h4v1h-4zM1 5h4v1h-4zM1 6h4v1h-4zM1 7h4v1h-4z" fill="#ffff00"/></svg>
<span class="t" style="top:464px;font-size:11px;transform:scaleX(0.8808);left:66px;">CB15B</span>
<div style="left:40px;top:485px;width:5px;height:1px;background:repeating-linear-gradient(to right,#808080 0,#808080 1px,transparent 1px,transparent 2px);"></div>
<div style="left:30px;top:481px;width:9px;height:9px;background:#fff;border:1px solid #808080;"></div>
<div style="left:32px;top:485px;width:5px;height:1px;background:#000;"></div>
<div style="left:34px;top:483px;width:1px;height:5px;background:#000;"></div>
<svg style="left:46px;top:477px;" width="15" height="15" viewBox="0 0 15 15" shape-rendering="crispEdges"><path d="M2 0h2v1h-2zM1 1h1v1h-1zM4 1h3v1h-3zM11 1h3v1h-3zM0 2h1v1h-1zM2 2h2v1h-2zM5 2h2v1h-2zM11 2h4v1h-4zM0 3h1v1h-1zM2 3h2v1h-2zM5 3h3v1h-3zM10 3h5v1h-5zM0 4h1v1h-1zM5 4h3v1h-3zM10 4h5v1h-5zM0 5h1v1h-1zM5 5h10v1h-10zM0 6h1v1h-1zM5 6h10v1h-10zM0 7h1v1h-1zM5 7h3v1h-3zM13 7h2v1h-2zM0 8h6v1h-6zM7 8h1v1h-1zM10 8h2v1h-2zM14 8h1v1h-1zM0 9h1v1h-1zM3 9h5v1h-5zM13 9h2v1h-2zM0 10h1v1h-1zM3 10h5v1h-5zM10 10h2v1h-2zM14 10h1v1h-1zM0 11h1v1h-1zM3 11h2v1h-2zM7 11h1v1h-1zM10 11h2v1h-2zM14 11h1v1h-1zM0 12h2v1h-2zM6 12h2v1h-2zM13 12h2v1h-2zM0 13h15v1h-15zM0 14h15v1h-15z" fill="#000"/><path d="M2 1h2v1h-2zM1 2h1v1h-1zM4 2h1v1h-1zM1 3h1v1h-1zM4 3h1v1h-1zM8 7h5v1h-5zM6 8h1v1h-1zM8 8h2v1h-2zM12 8h2v1h-2zM1 9h2v1h-2zM8 9h5v1h-5zM1 10h2v1h-2zM8 10h2v1h-2zM12 10h2v1h-2zM1 11h2v1h-2zM5 11h2v1h-2zM8 11h2v1h-2zM12 11h2v1h-2zM2 12h4v1h-4zM8 12h5v1h-5z" fill="#fff"/><path d="M1 4h4v1h-4zM1 5h4v1h-4zM1 6h4v1h-4zM1 7h4v1h-4z" fill="#ffff00"/></svg>
<span class="t" style="top:480px;font-size:11px;transform:scaleX(0.8976);left:66px;">CB16</span>
<div style="left:40px;top:501px;width:5px;height:1px;background:repeating-linear-gradient(to right,#808080 0,#808080 1px,transparent 1px,transparent 2px);"></div>
<div style="left:30px;top:497px;width:9px;height:9px;background:#fff;border:1px solid #808080;"></div>
<div style="left:32px;top:501px;width:5px;height:1px;background:#000;"></div>
<div style="left:34px;top:499px;width:1px;height:5px;background:#000;"></div>
<svg style="left:46px;top:493px;" width="15" height="15" viewBox="0 0 15 15" shape-rendering="crispEdges"><path d="M2 0h2v1h-2zM1 1h1v1h-1zM4 1h3v1h-3zM11 1h3v1h-3zM0 2h1v1h-1zM2 2h2v1h-2zM5 2h2v1h-2zM11 2h4v1h-4zM0 3h1v1h-1zM2 3h2v1h-2zM5 3h3v1h-3zM10 3h5v1h-5zM0 4h1v1h-1zM5 4h3v1h-3zM10 4h5v1h-5zM0 5h1v1h-1zM5 5h10v1h-10zM0 6h1v1h-1zM5 6h10v1h-10zM0 7h1v1h-1zM5 7h3v1h-3zM13 7h2v1h-2zM0 8h6v1h-6zM7 8h1v1h-1zM10 8h2v1h-2zM14 8h1v1h-1zM0 9h1v1h-1zM3 9h5v1h-5zM13 9h2v1h-2zM0 10h1v1h-1zM3 10h5v1h-5zM10 10h2v1h-2zM14 10h1v1h-1zM0 11h1v1h-1zM3 11h2v1h-2zM7 11h1v1h-1zM10 11h2v1h-2zM14 11h1v1h-1zM0 12h2v1h-2zM6 12h2v1h-2zM13 12h2v1h-2zM0 13h15v1h-15zM0 14h15v1h-15z" fill="#000"/><path d="M2 1h2v1h-2zM1 2h1v1h-1zM4 2h1v1h-1zM1 3h1v1h-1zM4 3h1v1h-1zM8 7h5v1h-5zM6 8h1v1h-1zM8 8h2v1h-2zM12 8h2v1h-2zM1 9h2v1h-2zM8 9h5v1h-5zM1 10h2v1h-2zM8 10h2v1h-2zM12 10h2v1h-2zM1 11h2v1h-2zM5 11h2v1h-2zM8 11h2v1h-2zM12 11h2v1h-2zM2 12h4v1h-4zM8 12h5v1h-5z" fill="#fff"/><path d="M1 4h4v1h-4zM1 5h4v1h-4zM1 6h4v1h-4zM1 7h4v1h-4z" fill="#ffff00"/></svg>
<span class="t" style="top:496px;font-size:11px;transform:scaleX(0.9095);left:66px;">CB16A</span>
<div style="left:40px;top:517px;width:5px;height:1px;background:repeating-linear-gradient(to right,#808080 0,#808080 1px,transparent 1px,transparent 2px);"></div>
<div style="left:30px;top:513px;width:9px;height:9px;background:#fff;border:1px solid #808080;"></div>
<div style="left:32px;top:517px;width:5px;height:1px;background:#000;"></div>
<div style="left:34px;top:515px;width:1px;height:5px;background:#000;"></div>
<svg style="left:46px;top:509px;" width="15" height="15" viewBox="0 0 15 15" shape-rendering="crispEdges"><path d="M2 0h2v1h-2zM1 1h1v1h-1zM4 1h3v1h-3zM11 1h3v1h-3zM0 2h1v1h-1zM2 2h2v1h-2zM5 2h2v1h-2zM11 2h4v1h-4zM0 3h1v1h-1zM2 3h2v1h-2zM5 3h3v1h-3zM10 3h5v1h-5zM0 4h1v1h-1zM5 4h3v1h-3zM10 4h5v1h-5zM0 5h1v1h-1zM5 5h10v1h-10zM0 6h1v1h-1zM5 6h10v1h-10zM0 7h1v1h-1zM5 7h3v1h-3zM13 7h2v1h-2zM0 8h6v1h-6zM7 8h1v1h-1zM10 8h2v1h-2zM14 8h1v1h-1zM0 9h1v1h-1zM3 9h5v1h-5zM13 9h2v1h-2zM0 10h1v1h-1zM3 10h5v1h-5zM10 10h2v1h-2zM14 10h1v1h-1zM0 11h1v1h-1zM3 11h2v1h-2zM7 11h1v1h-1zM10 11h2v1h-2zM14 11h1v1h-1zM0 12h2v1h-2zM6 12h2v1h-2zM13 12h2v1h-2zM0 13h15v1h-15zM0 14h15v1h-15z" fill="#000"/><path d="M2 1h2v1h-2zM1 2h1v1h-1zM4 2h1v1h-1zM1 3h1v1h-1zM4 3h1v1h-1zM8 7h5v1h-5zM6 8h1v1h-1zM8 8h2v1h-2zM12 8h2v1h-2zM1 9h2v1h-2zM8 9h5v1h-5zM1 10h2v1h-2zM8 10h2v1h-2zM12 10h2v1h-2zM1 11h2v1h-2zM5 11h2v1h-2zM8 11h2v1h-2zM12 11h2v1h-2zM2 12h4v1h-4zM8 12h5v1h-5z" fill="#fff"/><path d="M1 4h4v1h-4zM1 5h4v1h-4zM1 6h4v1h-4zM1 7h4v1h-4z" fill="#ffff00"/></svg>
<span class="t" style="top:512px;font-size:11px;transform:scaleX(0.8976);left:66px;">CB17</span>
<svg style="left:7px;top:28px;" width="16" height="15" viewBox="0 0 16 15" shape-rendering="crispEdges"><path d="M0 0h1v1h-1zM2 0h1v1h-1zM4 0h1v1h-1zM1 1h3v1h-3zM0 2h5v1h-5zM1 3h3v1h-3zM0 4h1v1h-1zM2 4h1v1h-1zM4 4h1v1h-1z" fill="#ffff00"/><path d="M1 0h1v1h-1zM3 0h1v1h-1zM5 0h11v1h-11zM0 1h1v1h-1zM4 1h12v1h-12zM5 2h3v1h-3zM10 2h2v1h-2zM14 2h2v1h-2zM0 3h1v1h-1zM7 3h2v1h-2zM13 3h3v1h-3zM1 4h1v1h-1zM5 4h5v1h-5zM12 4h4v1h-4zM0 5h2v1h-2zM6 5h4v1h-4zM12 5h4v1h-4zM0 6h2v1h-2zM4 6h5v1h-5zM13 6h3v1h-3zM0 7h2v1h-2zM4 7h4v1h-4zM10 7h2v1h-2zM14 7h2v1h-2zM0 8h16v1h-16zM0 9h16v1h-16zM0 10h3v1h-3zM13 10h3v1h-3zM0 11h2v1h-2zM14 11h2v1h-2zM0 12h3v1h-3zM13 12h3v1h-3zM0 13h16v1h-16zM0 14h16v1h-16z" fill="#800000"/><path d="M8 2h2v1h-2zM12 2h2v1h-2zM4 3h3v1h-3zM9 3h4v1h-4zM3 4h1v1h-1zM10 4h2v1h-2zM2 5h4v1h-4zM10 5h2v1h-2zM2 6h2v1h-2zM9 6h4v1h-4zM2 7h2v1h-2zM8 7h2v1h-2zM12 7h2v1h-2zM3 10h10v1h-10zM2 11h12v1h-12zM3 12h10v1h-10z" fill="#ffffff"/></svg>
<svg style="left:31px;top:28px;" width="16" height="15" viewBox="0 0 16 15" shape-rendering="crispEdges"><path d="M0 0h1v1h-1zM2 0h1v1h-1zM4 0h1v1h-1zM1 1h3v1h-3zM0 2h5v1h-5zM1 3h3v1h-3zM0 4h1v1h-1zM2 4h1v1h-1zM4 4h1v1h-1z" fill="#ffff00"/><path d="M4 1h2v1h-2zM10 1h6v1h-6zM5 2h2v1h-2zM9 2h7v1h-7zM4 3h3v1h-3zM9 3h7v1h-7zM1 4h1v1h-1zM3 4h1v1h-1zM5 4h3v1h-3zM9 4h7v1h-7zM1 5h15v1h-15zM1 6h15v1h-15zM1 7h2v1h-2zM7 7h2v1h-2zM14 7h2v1h-2zM1 8h1v1h-1zM4 8h2v1h-2zM8 8h1v1h-1zM11 8h2v1h-2zM15 8h1v1h-1zM1 9h1v1h-1zM4 9h5v1h-5zM14 9h2v1h-2zM1 10h1v1h-1zM4 10h5v1h-5zM11 10h2v1h-2zM15 10h1v1h-1zM1 11h1v1h-1zM4 11h2v1h-2zM8 11h1v1h-1zM11 11h2v1h-2zM15 11h1v1h-1zM1 12h2v1h-2zM7 12h2v1h-2zM14 12h2v1h-2zM1 13h15v1h-15zM1 14h15v1h-15z" fill="#000000"/><path d="M3 7h4v1h-4zM9 7h5v1h-5zM2 8h2v1h-2zM6 8h2v1h-2zM9 8h2v1h-2zM13 8h2v1h-2zM2 9h2v1h-2zM9 9h5v1h-5zM2 10h2v1h-2zM9 10h2v1h-2zM13 10h2v1h-2zM2 11h2v1h-2zM6 11h2v1h-2zM9 11h2v1h-2zM13 11h2v1h-2zM3 12h4v1h-4zM9 12h5v1h-5z" fill="#ffffff"/></svg>
<svg style="left:55px;top:28px;" width="16" height="15" viewBox="0 0 16 15" shape-rendering="crispEdges"><path d="M0 0h1v1h-1zM2 0h1v1h-1zM4 0h1v1h-1zM1 1h3v1h-3zM0 2h5v1h-5zM1 3h3v1h-3zM0 4h1v1h-1zM2 4h1v1h-1zM4 4h1v1h-1z" fill="#ffff00"/><path d="M1 0h1v1h-1zM3 0h1v1h-1zM5 0h11v1h-11zM0 1h1v1h-1zM4 1h12v1h-12zM5 2h11v1h-11zM0 3h1v1h-1zM6 3h3v1h-3zM14 3h2v1h-2zM1 4h1v1h-1zM7 4h2v1h-2zM11 4h2v1h-2zM15 4h1v1h-1zM0 5h2v1h-2zM4 5h2v1h-2zM8 5h1v1h-1zM14 5h2v1h-2zM0 6h2v1h-2zM8 6h1v1h-1zM11 6h2v1h-2zM15 6h1v1h-1zM0 7h2v1h-2zM4 7h2v1h-2zM8 7h1v1h-1zM11 7h2v1h-2zM15 7h1v1h-1zM0 8h2v1h-2zM4 8h2v1h-2zM8 8h1v1h-1zM14 8h2v1h-2zM0 9h16v1h-16zM0 10h3v1h-3zM13 10h3v1h-3zM0 11h2v1h-2zM14 11h2v1h-2zM0 12h3v1h-3zM13 12h3v1h-3zM0 13h16v1h-16zM0 14h16v1h-16z" fill="#008000"/><path d="M4 3h2v1h-2zM9 3h5v1h-5zM3 4h1v1h-1zM5 4h2v1h-2zM9 4h2v1h-2zM13 4h2v1h-2zM2 5h2v1h-2zM6 5h2v1h-2zM9 5h5v1h-5zM2 6h6v1h-6zM9 6h2v1h-2zM13 6h2v1h-2zM2 7h2v1h-2zM6 7h2v1h-2zM9 7h2v1h-2zM13 7h2v1h-2zM2 8h2v1h-2zM6 8h2v1h-2zM9 8h5v1h-5z" fill="#d8d800"/><path d="M3 10h10v1h-10zM2 11h12v1h-12zM3 12h10v1h-10z" fill="#ffffff"/></svg>
<svg style="left:103px;top:28px;" width="14" height="14" viewBox="0 0 14 14" shape-rendering="crispEdges"><path d="M3 0h4v1h-4zM0 1h1v1h-1zM2 1h1v1h-1zM7 1h3v1h-3zM0 2h2v1h-2zM7 2h1v1h-1zM9 2h2v1h-2zM0 3h3v1h-3zM5 3h1v1h-1zM7 3h1v1h-1zM9 3h1v1h-1zM11 3h1v1h-1zM4 4h2v1h-2zM9 4h4v1h-4zM2 5h2v1h-2zM12 5h1v1h-1zM2 6h1v1h-1zM12 6h1v1h-1zM2 7h1v1h-1zM4 7h7v1h-7zM12 7h1v1h-1zM2 8h1v1h-1zM12 8h1v1h-1zM2 9h1v1h-1zM4 9h7v1h-7zM12 9h1v1h-1zM2 10h1v1h-1zM12 10h1v1h-1zM2 11h1v1h-1zM4 11h7v1h-7zM12 11h1v1h-1zM2 12h1v1h-1zM12 12h1v1h-1zM2 13h11v1h-11z" fill="#696969"/></svg>
<svg style="left:127px;top:28px;" width="14" height="14" viewBox="0 0 14 14" shape-rendering="crispEdges"><path d="M0 0h2v1h-2zM5 0h2v1h-2zM0 1h3v1h-3zM4 1h6v1h-6zM1 2h5v1h-5zM9 2h2v1h-2zM2 3h3v1h-3zM9 3h1v1h-1zM11 3h1v1h-1zM1 4h5v1h-5zM9 4h4v1h-4zM0 5h3v1h-3zM4 5h3v1h-3zM12 5h1v1h-1zM0 6h2v1h-2zM5 6h2v1h-2zM12 6h1v1h-1zM2 7h1v1h-1zM7 7h4v1h-4zM12 7h1v1h-1zM2 8h1v1h-1zM12 8h1v1h-1zM2 9h1v1h-1zM4 9h7v1h-7zM12 9h1v1h-1zM2 10h1v1h-1zM12 10h1v1h-1zM2 11h1v1h-1zM4 11h7v1h-7zM12 11h1v1h-1zM2 12h1v1h-1zM12 12h1v1h-1zM2 13h11v1h-11z" fill="#696969"/></svg>
<svg style="left:157px;top:27px;" width="16" height="16" viewBox="0 0 16 16" shape-rendering="crispEdges"><path d="M3 0h1v1h-1zM0 1h1v1h-1zM3 1h1v1h-1zM6 1h3v1h-3zM1 2h1v1h-1zM3 2h1v1h-1zM5 2h6v1h-6zM2 3h10v1h-10zM0 4h8v1h-8zM9 4h4v1h-4zM2 5h8v1h-8zM11 5h3v1h-3zM1 6h1v1h-1zM3 6h1v1h-1zM5 6h3v1h-3zM9 6h5v1h-5zM0 7h1v1h-1zM3 7h1v1h-1zM5 7h5v1h-5zM11 7h3v1h-3zM5 8h3v1h-3zM9 8h5v1h-5zM5 9h5v1h-5zM11 9h3v1h-3zM5 10h3v1h-3zM9 10h5v1h-5zM5 11h5v1h-5zM11 11h3v1h-3zM5 12h3v1h-3zM9 12h5v1h-5zM5 13h8v1h-8zM5 14h7v1h-7zM6 15h4v1h-4z" fill="#696969"/><path d="M8 4h1v1h-1zM10 5h1v1h-1zM8 6h1v1h-1zM10 7h1v1h-1zM8 8h1v1h-1zM10 9h1v1h-1zM8 10h1v1h-1zM10 11h1v1h-1zM8 12h1v1h-1z" fill="#ffffff"/></svg>
<svg style="left:181px;top:28px;" width="16" height="16" viewBox="0 0 16 16" shape-rendering="crispEdges"><path d="M2 0h1v1h-1zM7 0h4v1h-4zM0 1h1v1h-1zM2 1h1v1h-1zM4 1h1v1h-1zM6 1h7v1h-7zM1 2h3v1h-3zM5 2h9v1h-9zM0 3h15v1h-15zM1 4h14v1h-14zM0 5h1v1h-1zM2 5h1v1h-1zM4 5h11v1h-11zM4 6h12v1h-12zM4 7h12v1h-12zM3 8h13v1h-13zM3 9h13v1h-13zM2 10h14v1h-14zM2 11h14v1h-14zM6 12h1v1h-1zM11 12h1v1h-1zM6 13h1v1h-1zM11 13h1v1h-1z" fill="#696969"/></svg>
<svg style="left:205px;top:28px;" width="16" height="16" viewBox="0 0 16 16" shape-rendering="crispEdges"><path d="M0 0h2v1h-2zM5 0h4v1h-4zM0 1h3v1h-3zM4 1h7v1h-7zM1 2h11v1h-11zM2 3h6v1h-6zM9 3h4v1h-4zM1 4h9v1h-9zM11 4h3v1h-3zM0 5h3v1h-3zM4 5h4v1h-4zM9 5h5v1h-5zM0 6h2v1h-2zM5 6h5v1h-5zM11 6h3v1h-3zM5 7h3v1h-3zM9 7h5v1h-5zM5 8h5v1h-5zM11 8h3v1h-3zM5 9h3v1h-3zM9 9h5v1h-5zM5 10h5v1h-5zM11 10h3v1h-3zM5 11h3v1h-3zM9 11h5v1h-5zM5 12h8v1h-8zM5 13h7v1h-7zM6 14h4v1h-4z" fill="#696969"/><path d="M8 3h1v1h-1zM10 4h1v1h-1zM8 5h1v1h-1zM10 6h1v1h-1zM8 7h1v1h-1zM10 8h1v1h-1zM8 9h1v1h-1zM10 10h1v1h-1zM8 11h1v1h-1z" fill="#ffffff"/></svg>
<svg style="left:10px;top:53px;" width="14" height="14" viewBox="0 0 14 14" shape-rendering="crispEdges"><path d="M0 0h13v1h-13zM0 1h2v1h-2zM11 1h3v1h-3zM0 2h2v1h-2zM11 2h3v1h-3zM0 3h2v1h-2zM11 3h3v1h-3zM0 4h2v1h-2zM11 4h3v1h-3zM0 5h2v1h-2zM11 5h3v1h-3zM0 6h2v1h-2zM11 6h3v1h-3zM0 7h2v1h-2zM11 7h3v1h-3zM0 8h14v1h-14zM0 9h3v1h-3zM11 9h3v1h-3zM0 10h3v1h-3zM11 10h3v1h-3zM0 11h3v1h-3zM11 11h3v1h-3zM0 12h3v1h-3zM11 12h3v1h-3zM0 13h3v1h-3zM11 13h3v1h-3z" fill="#b4b4b4"/><path d="M2 1h9v1h-9zM2 2h9v1h-9zM2 3h9v1h-9zM2 4h9v1h-9zM2 5h9v1h-9zM2 6h9v1h-9zM2 7h9v1h-9zM4 10h3v1h-3zM4 11h3v1h-3zM4 12h3v1h-3z" fill="#f2f2f2"/><path d="M3 9h8v1h-8zM3 10h1v1h-1zM7 10h4v1h-4zM3 11h1v1h-1zM7 11h4v1h-4zM3 12h1v1h-1zM7 12h4v1h-4zM3 13h8v1h-8z" fill="#989898"/></svg>
<div style="left:237px;top:22px;width:1px;height:500px;background:#fff;"></div>
<div style="left:238px;top:21px;width:43px;height:1px;background:#fff;"></div>
<div style="left:281px;top:22px;width:1px;height:19px;background:#a0a0a0;"></div>
<div style="left:282px;top:23px;width:1px;height:18px;background:#696969;"></div>
<div style="left:237px;top:21px;width:236px;height:1px;background:#fff;"></div>
<div style="left:284px;top:23px;width:37px;height:1px;background:#fff;"></div>
<div style="left:321px;top:24px;width:1px;height:17px;background:#a0a0a0;"></div>
<div style="left:322px;top:23px;width:1px;height:18px;background:#696969;"></div>
<div style="left:323px;top:24px;width:1px;height:17px;background:#fff;"></div>
<div style="left:324px;top:23px;width:58px;height:1px;background:#fff;"></div>
<div style="left:382px;top:24px;width:1px;height:17px;background:#a0a0a0;"></div>
<div style="left:383px;top:23px;width:1px;height:18px;background:#696969;"></div>
<div style="left:283px;top:41px;width:188px;height:1px;background:#fff;"></div>
<div style="left:471px;top:42px;width:1px;height:480px;background:#a0a0a0;"></div>
<div style="left:472px;top:41px;width:1px;height:480px;background:#696969;"></div>
<span class="t" style="top:26px;font-size:11px;transform:scaleX(0.8871);left:244px;">Build</span>
<span class="t" style="top:28px;font-size:11px;transform:scaleX(1.0410);left:286px;">Test</span>
<span class="t" style="top:28px;font-size:11px;transform:scaleX(0.9013);left:328px;">LED Board</span>
<div style="left:246px;top:52px;width:1px;height:167px;background:#a0a0a0;"></div>
<div style="left:247px;top:53px;width:1px;height:166px;background:#fff;"></div>
<div style="left:465px;top:52px;width:1px;height:167px;background:#a0a0a0;"></div>
<div style="left:466px;top:52px;width:1px;height:168px;background:#fff;"></div>
<div style="left:246px;top:218px;width:220px;height:1px;background:#a0a0a0;"></div>
<div style="left:246px;top:219px;width:221px;height:1px;background:#fff;"></div>
<div style="left:246px;top:52px;width:7px;height:1px;background:#a0a0a0;"></div>
<div style="left:247px;top:53px;width:6px;height:1px;background:#fff;"></div>
<div style="left:285px;top:52px;width:181px;height:1px;background:#a0a0a0;"></div>
<div style="left:285px;top:53px;width:180px;height:1px;background:#fff;"></div>
<span class="t" style="top:48px;font-size:12px;transform:scaleX(0.8744);left:255px;">Probe</span>
<div class="rais" style="left:256px;top:61px;width:56px;height:26px;"></div>
<span class="t dis" style="top:68px;font-size:12px;transform:scaleX(0.9414);left:271px;">Once</span>
<div class="rais" style="left:328px;top:61px;width:56px;height:26px;"></div>
<span class="t dis" style="top:68px;font-size:12px;transform:scaleX(0.9688);left:343.3px;">Scan</span>
<div class="rais" style="left:400px;top:61px;width:56px;height:26px;"></div>
<span class="t dis" style="top:68px;font-size:12px;transform:scaleX(0.9925);left:416.8px;">Stop</span>
<div class="sunk" style="left:256px;top:92px;width:200px;height:39px;background:#800000;"></div>
<span class="t" style="top:98px;font-size:16px;font-weight:bold;color:#ffcc00;left:319.44px;">View Map</span>
<span class="t" style="top:115px;font-size:11px;color:#ffcc00;transform:scaleX(0.9381);left:290.75px;">Click EDIT to make changes</span>
<div class="sunk" style="left:256px;top:138px;width:13px;height:13px;background:#f0f0f0;"></div>
<svg style="left:259px;top:141px;" width="7" height="7" viewBox="0 0 7 7" shape-rendering="crispEdges"><path d="M0 2v3l2 2l5-5v-3l-5 5z" fill="#a0a0a0"/></svg>
<span class="t dis" style="top:138px;font-size:12px;transform:scaleX(0.9021);left:274.3px;">Acquire Pin Trace Resistance</span>
<span class="t" style="top:159px;font-size:12px;transform:scaleX(0.8713);left:256.5px;">4-Wire Current Source:</span>
<div class="sunk" style="left:256px;top:173px;width:203px;height:21px;background:#f0f0f0;"></div>
<span class="t dis" style="top:178px;font-size:12px;transform:scaleX(0.8956);left:260px;">On Higher Pin</span>
<div class="rais" style="left:441px;top:175px;width:16px;height:17px;"></div>
<svg style="left:446px;top:182px;" width="8" height="5" viewBox="0 0 8 5" shape-rendering="crispEdges"><path d="M1 1h7v1h-1v1h-1v1h-1v1h-1v-1h-1v-1h-1v-1h-1z" fill="#fff"/><path d="M0 0h7v1h-1v1h-1v1h-1v1h-1v-1h-1v-1h-1v-1h-1z" fill="#a0a0a0"/></svg>
<div class="sunk" style="left:256px;top:200px;width:13px;height:13px;background:#f0f0f0;"></div>
<span class="t dis" style="top:200px;font-size:12px;transform:scaleX(0.8960);left:274.3px;">All Pins Have Source</span>
<div style="left:246px;top:231px;width:1px;height:42px;background:#a0a0a0;"></div>
<div style="left:247px;top:232px;width:1px;height:41px;background:#fff;"></div>
<div style="left:465px;top:231px;width:1px;height:42px;background:#a0a0a0;"></div>
<div style="left:466px;top:231px;width:1px;height:43px;background:#fff;"></div>
<div style="left:246px;top:272px;width:220px;height:1px;background:#a0a0a0;"></div>
<div style="left:246px;top:273px;width:221px;height:1px;background:#fff;"></div>
<div style="left:246px;top:231px;width:7px;height:1px;background:#a0a0a0;"></div>
<div style="left:247px;top:232px;width:6px;height:1px;background:#fff;"></div>
<div style="left:309px;top:231px;width:157px;height:1px;background:#a0a0a0;"></div>
<div style="left:309px;top:232px;width:156px;height:1px;background:#fff;"></div>
<span class="t" style="top:227px;font-size:12px;transform:scaleX(0.8977);left:255.3px;">Next Label</span>
<div class="rais" style="left:252px;top:245px;width:44px;height:23px;"></div>
<span class="t dis" style="top:250px;font-size:12px;transform:scaleX(0.9366);left:260.5px;">Label</span>
<div class="sunk" style="left:300px;top:246px;width:41px;height:21px;background:#f0f0f0;"></div>
<div class="sunk" style="left:345px;top:246px;width:36px;height:21px;background:#f0f0f0;"></div>
<div class="rais" style="left:363px;top:248px;width:16px;height:8px;"></div>
<div class="rais" style="left:363px;top:257px;width:16px;height:8px;"></div>
<svg style="left:370px;top:251px;" width="3" height="2" viewBox="0 0 3 2" shape-rendering="crispEdges"><path d="M1 0h1v1h1v1h-3v-1h1z" fill="#909090"/></svg>
<svg style="left:370px;top:260px;" width="3" height="2" viewBox="0 0 3 2" shape-rendering="crispEdges"><path d="M0 0h3v1h-1v1h-1v-1h-1z" fill="#808080"/></svg>
<span class="t" style="top:251px;font-size:12px;transform:scaleX(0.8498);left:401px;">Incr</span>
<div class="sunk" style="left:421px;top:246px;width:26px;height:21px;background:#f0f0f0;"></div>
<div class="rais" style="left:429px;top:248px;width:16px;height:8px;"></div>
<div class="rais" style="left:429px;top:257px;width:16px;height:8px;"></div>
<svg style="left:436px;top:251px;" width="3" height="2" viewBox="0 0 3 2" shape-rendering="crispEdges"><path d="M1 0h1v1h1v1h-3v-1h1z" fill="#909090"/></svg>
<svg style="left:436px;top:260px;" width="3" height="2" viewBox="0 0 3 2" shape-rendering="crispEdges"><path d="M0 0h3v1h-1v1h-1v-1h-1z" fill="#808080"/></svg>
<div style="left:246px;top:282px;width:217px;height:240px;background:#0000a0;border-left:1px solid #a0a0a0;border-top:1px solid #a0a0a0;"></div>
<div style="left:446px;top:283px;width:17px;height:240px;background:repeating-conic-gradient(#fff 0 25%,#f0f0f0 0 50%) 0 0/2px 2px;"></div>
<div class="rais" style="left:446px;top:300px;width:17px;height:108px;background:#f0f0f0;"></div>
<div class="rais" style="left:446px;top:507px;width:17px;height:17px;background:#f0f0f0;"></div>
<div style="left:463px;top:282px;width:1px;height:240px;background:#fff;"></div>
<div class="rais" style="left:446px;top:283px;width:17px;height:17px;background:#f0f0f0;"></div>
<svg style="left:451px;top:289px;" width="7" height="4" viewBox="0 0 7 4" shape-rendering="crispEdges"><path d="M3 0h1v1h1v1h1v1h1v1h-7v-1h1v-1h1v-1h1z" fill="#000"/></svg>
<svg style="left:247px;top:283px;" width="199" height="231" viewBox="247 283 199 231" shape-rendering="crispEdges"><path d="M333 346h63v1h-63zM333 362h63v1h-63zM333 378h63v1h-63zM333 394h63v1h-63zM333 410h63v1h-63zM333 426h63v1h-63zM333 442h63v1h-63zM333 458h63v1h-63zM353 354h23v1h-23zM382 354h14v1h-14zM353 370h23v1h-23zM388 370h8v1h-8zM353 386h23v1h-23zM388 386h8v1h-8zM353 402h23v1h-23zM388 402h8v1h-8zM353 418h23v1h-23zM388 418h8v1h-8zM353 434h23v1h-23zM388 434h8v1h-8zM353 450h23v1h-23zM388 450h8v1h-8zM360 333h16v1h-16zM388 333h8v1h-8z" fill="#b4b4ff"/><path d="M353.5 340.5 L360.5 333.5" stroke="#b4b4ff" stroke-width="1" fill="none" shape-rendering="auto"/><path d="M322.6 343 Q322.6 336.3 329.5 336.3 L357.5 344.6 Q364.4 346.8 364.4 353 L364.4 453.6 Q364.4 459.8 357.5 462 L329.5 470.3 Q322.6 470.3 322.6 463.6 Z" fill="none" stroke="#fff" stroke-width="2.7" stroke-linejoin="round" shape-rendering="auto"/><circle cx="333.5" cy="346.5" r="3" fill="none" stroke="#ffff00" stroke-width="1.3" shape-rendering="auto"/><circle cx="333.5" cy="362.5" r="3" fill="none" stroke="#ffff00" stroke-width="1.3" shape-rendering="auto"/><circle cx="333.5" cy="378.5" r="3" fill="none" stroke="#ffff00" stroke-width="1.3" shape-rendering="auto"/><circle cx="333.5" cy="394.5" r="3" fill="none" stroke="#ffff00" stroke-width="1.3" shape-rendering="auto"/><circle cx="333.5" cy="410.5" r="3" fill="none" stroke="#ffff00" stroke-width="1.3" shape-rendering="auto"/><circle cx="333.5" cy="426.5" r="3" fill="none" stroke="#ffff00" stroke-width="1.3" shape-rendering="auto"/><circle cx="333.5" cy="442.5" r="3" fill="none" stroke="#ffff00" stroke-width="1.3" shape-rendering="auto"/><circle cx="333.5" cy="458.5" r="3" fill="none" stroke="#ffff00" stroke-width="1.3" shape-rendering="auto"/><circle cx="353.5" cy="354.5" r="3" fill="none" stroke="#ffff00" stroke-width="1.3" shape-rendering="auto"/><circle cx="353.5" cy="370.5" r="3" fill="none" stroke="#ffff00" stroke-width="1.3" shape-rendering="auto"/><circle cx="353.5" cy="386.5" r="3" fill="none" stroke="#ffff00" stroke-width="1.3" shape-rendering="auto"/><circle cx="353.5" cy="402.5" r="3" fill="none" stroke="#ffff00" stroke-width="1.3" shape-rendering="auto"/><circle cx="353.5" cy="418.5" r="3" fill="none" stroke="#ffff00" stroke-width="1.3" shape-rendering="auto"/><circle cx="353.5" cy="434.5" r="3" fill="none" stroke="#ffff00" stroke-width="1.3" shape-rendering="auto"/><circle cx="353.5" cy="450.5" r="3" fill="none" stroke="#ffff00" stroke-width="1.3" shape-rendering="auto"/></svg>
<span class="t" style="top:342px;font-size:10px;color:#fff;left:307.02px;">1</span>
<span class="t" style="top:358px;font-size:10px;color:#fff;left:307.02px;">2</span>
<span class="t" style="top:374px;font-size:10px;color:#fff;left:307.02px;">3</span>
<span class="t" style="top:390px;font-size:10px;color:#fff;left:307.02px;">4</span>
<span class="t" style="top:406px;font-size:10px;color:#fff;left:307.02px;">5</span>
<span class="t" style="top:422px;font-size:10px;color:#fff;left:307.02px;">6</span>
<span class="t" style="top:438px;font-size:10px;color:#fff;left:307.02px;">7</span>
<span class="t" style="top:454px;font-size:10px;color:#fff;left:307.02px;">8</span>
<span class="t" style="top:350px;font-size:10px;color:#fff;left:377px;">9</span>
<span class="t" style="top:366px;font-size:10px;color:#fff;left:377px;">10</span>
<span class="t" style="top:382px;font-size:10px;color:#fff;left:377px;">11</span>
<span class="t" style="top:398px;font-size:10px;color:#fff;left:377px;">12</span>
<span class="t" style="top:414px;font-size:10px;color:#fff;left:377px;">13</span>
<span class="t" style="top:430px;font-size:10px;color:#fff;left:377px;">14</span>
<span class="t" style="top:446px;font-size:10px;color:#fff;left:377px;">15</span>
<span class="t" style="top:329px;font-size:10px;color:#fff;transform:scaleX(0.7918);left:377px;">SH</span>
<div class="rais" style="left:484px;top:24px;width:21px;height:23px;"></div>
<div class="rais" style="left:508px;top:24px;width:21px;height:23px;"></div>
<div class="rais" style="left:532px;top:24px;width:21px;height:23px;"></div>
<div class="rais" style="left:562px;top:24px;width:38px;height:23px;"></div>
<div class="rais" style="left:603px;top:24px;width:38px;height:23px;"></div>
<div class="rais" style="left:643px;top:24px;width:21px;height:23px;"></div>
<div class="rais" style="left:673px;top:24px;width:21px;height:23px;"></div>
<div class="rais" style="left:697px;top:24px;width:21px;height:23px;"></div>
<svg style="left:484px;top:24px;" width="21" height="23" viewBox="0 0 21 23" shape-rendering="crispEdges"><path d="M4.5 16.5 L15 6.5" stroke="#696969" stroke-width="3.2" stroke-linecap="round" fill="none" shape-rendering="auto"/></svg>
<svg style="left:508px;top:24px;" width="21" height="23" viewBox="0 0 21 23" shape-rendering="crispEdges"><path d="M3.8 11.8 L7.5 15.5 L16.5 6.5" stroke="#696969" stroke-width="2.2" fill="none" shape-rendering="auto"/></svg>
<svg style="left:532px;top:24px;" width="21" height="23" viewBox="0 0 21 23" shape-rendering="crispEdges"><path d="M3.5 5.5 L17 17.5 M17 5.5 L3.5 17.5" stroke="#696969" stroke-width="2" fill="none" shape-rendering="auto"/></svg>
<svg style="left:567px;top:28px;" width="16" height="13" viewBox="0 0 16 13" shape-rendering="crispEdges"><path d="M0 0h6v1h-6zM0 1h1v1h-1zM5 1h2v1h-2zM0 2h1v1h-1zM2 2h2v1h-2zM5 2h3v1h-3zM0 3h1v1h-1zM0 4h1v1h-1zM2 4h4v1h-4zM0 5h1v1h-1zM0 6h1v1h-1zM2 6h4v1h-4zM0 7h1v1h-1zM0 8h6v1h-6z" fill="#000000"/><path d="M1 1h4v1h-4zM1 2h1v1h-1zM4 2h1v1h-1zM1 3h5v1h-5zM1 4h1v1h-1zM7 4h4v1h-4zM1 5h5v1h-5zM7 5h1v1h-1zM10 5h1v1h-1zM12 5h1v1h-1zM1 6h1v1h-1zM7 6h4v1h-4zM1 7h5v1h-5zM7 7h1v1h-1zM12 7h2v1h-2zM7 8h7v1h-7zM7 9h1v1h-1zM13 9h1v1h-1zM7 10h7v1h-7z" fill="#ffffff"/><path d="M6 3h6v1h-6zM6 4h1v1h-1zM11 4h2v1h-2zM6 5h1v1h-1zM8 5h2v1h-2zM11 5h1v1h-1zM13 5h1v1h-1zM6 6h1v1h-1zM11 6h4v1h-4zM6 7h1v1h-1zM8 7h4v1h-4zM14 7h1v1h-1zM6 8h1v1h-1zM14 8h1v1h-1zM6 9h1v1h-1zM8 9h5v1h-5zM14 9h1v1h-1zM6 10h1v1h-1zM14 10h1v1h-1zM6 11h9v1h-9z" fill="#000080"/></svg>
<div style="left:585px;top:27px;width:1px;height:16px;background:#a0a0a0;"></div>
<div style="left:586px;top:27px;width:1px;height:16px;background:#fff;"></div>
<svg style="left:590px;top:39px;" width="5" height="3" viewBox="0 0 5 3" shape-rendering="crispEdges"><path d="M0 0h5v1h-1v1h-1v1h-1v-1h-1v-1h-1z" fill="#000"/></svg>
<svg style="left:608px;top:28px;" width="15" height="14" viewBox="0 0 15 14" shape-rendering="crispEdges"><path d="M4 0h5v1h-5zM3 1h2v1h-2zM8 1h2v1h-2zM1 2h12v1h-12zM0 3h4v1h-4zM10 3h4v1h-4zM0 4h14v1h-14zM0 5h14v1h-14zM0 6h14v1h-14zM0 7h13v1h-13zM0 8h8v1h-8zM12 8h2v1h-2zM0 9h8v1h-8zM9 9h2v1h-2zM12 9h1v1h-1zM14 9h1v1h-1zM0 10h8v1h-8zM14 10h1v1h-1zM0 11h8v1h-8zM9 11h4v1h-4zM14 11h1v1h-1zM1 12h7v1h-7zM14 12h1v1h-1zM7 13h8v1h-8z" fill="#696969"/><path d="M4 3h6v1h-6zM8 8h4v1h-4zM8 9h1v1h-1zM11 9h1v1h-1zM13 9h1v1h-1zM8 10h6v1h-6zM8 11h1v1h-1zM13 11h1v1h-1zM8 12h6v1h-6z" fill="#e8e8e8"/></svg>
<div style="left:626px;top:27px;width:1px;height:16px;background:#a0a0a0;"></div>
<div style="left:627px;top:27px;width:1px;height:16px;background:#fff;"></div>
<svg style="left:631px;top:39px;" width="5" height="3" viewBox="0 0 5 3" shape-rendering="crispEdges"><path d="M0 0h5v1h-1v1h-1v1h-1v-1h-1v-1h-1z" fill="#808080"/></svg>
<svg style="left:646px;top:28px;" width="15" height="14" viewBox="0 0 15 14" shape-rendering="crispEdges"><path d="M4 0h5v1h-5zM3 1h2v1h-2zM8 1h2v1h-2zM1 2h12v1h-12zM0 3h8v1h-8zM10 3h4v1h-4zM0 4h14v1h-14zM0 5h14v1h-14zM0 6h14v1h-14zM0 7h13v1h-13zM0 8h8v1h-8zM12 8h2v1h-2zM0 9h8v1h-8zM9 9h2v1h-2zM12 9h1v1h-1zM14 9h1v1h-1zM0 10h8v1h-8zM14 10h1v1h-1zM0 11h8v1h-8zM9 11h4v1h-4zM14 11h1v1h-1zM1 12h7v1h-7zM14 12h1v1h-1zM7 13h8v1h-8z" fill="#696969"/><path d="M8 3h2v1h-2zM8 8h4v1h-4zM8 9h1v1h-1zM11 9h1v1h-1zM13 9h1v1h-1zM8 10h6v1h-6zM8 11h1v1h-1zM13 11h1v1h-1zM8 12h6v1h-6z" fill="#e8e8e8"/></svg>
<svg style="left:675px;top:28px;" width="16" height="15" viewBox="0 0 16 15" shape-rendering="crispEdges"><path d="M1 1h2v1h-2zM5 1h2v1h-2zM1 2h2v1h-2zM5 2h2v1h-2zM1 3h2v1h-2zM5 3h2v1h-2zM1 4h2v1h-2zM5 4h2v1h-2zM9 4h2v1h-2zM1 5h2v1h-2zM5 5h2v1h-2zM9 5h2v1h-2zM1 6h2v1h-2zM5 6h2v1h-2zM9 6h2v1h-2zM1 7h6v1h-6zM9 7h2v1h-2zM13 7h2v1h-2zM2 8h5v1h-5zM9 8h2v1h-2zM13 8h2v1h-2zM3 9h5v1h-5zM9 9h2v1h-2zM13 9h2v1h-2zM5 10h6v1h-6zM13 10h2v1h-2zM6 11h5v1h-5zM13 11h2v1h-2zM8 12h7v1h-7zM9 13h6v1h-6zM11 14h3v1h-3z" fill="#696969"/></svg>
<svg style="left:699px;top:28px;" width="6" height="11" viewBox="0 0 6 11" shape-rendering="crispEdges"><path d="M1 0h3v1h-3zM0 1h4v1h-4zM0 2h4v1h-4zM1 3h3v1h-3zM5 3h1v1h-1zM1 4h3v1h-3zM5 4h1v1h-1zM1 5h3v1h-3zM1 6h3v1h-3zM1 7h3v1h-3zM4 9h2v1h-2zM3 10h2v1h-2z" fill="#696969"/></svg>
<div style="left:484px;top:63px;width:90px;height:1px;background:#fff;"></div>
<div style="left:483px;top:64px;width:1px;height:17px;background:#fff;"></div>
<div style="left:574px;top:63px;width:1px;height:17px;background:#a0a0a0;"></div>
<div style="left:575px;top:63px;width:1px;height:17px;background:#696969;"></div>
<div style="left:578px;top:63px;width:114px;height:1px;background:#fff;"></div>
<div style="left:577px;top:64px;width:1px;height:17px;background:#fff;"></div>
<div style="left:692px;top:63px;width:1px;height:17px;background:#a0a0a0;"></div>
<div style="left:693px;top:63px;width:1px;height:17px;background:#696969;"></div>
<div style="left:696px;top:63px;width:63px;height:1px;background:#fff;"></div>
<div style="left:695px;top:64px;width:1px;height:17px;background:#fff;"></div>
<div style="left:759px;top:63px;width:1px;height:17px;background:#a0a0a0;"></div>
<div style="left:760px;top:63px;width:1px;height:17px;background:#696969;"></div>
<div style="left:484px;top:81px;width:80px;height:1px;background:#fff;"></div>
<div style="left:483px;top:82px;width:1px;height:17px;background:#fff;"></div>
<div style="left:564px;top:81px;width:1px;height:17px;background:#a0a0a0;"></div>
<div style="left:565px;top:81px;width:1px;height:17px;background:#696969;"></div>
<div style="left:568px;top:81px;width:95px;height:1px;background:#fff;"></div>
<div style="left:567px;top:82px;width:1px;height:17px;background:#fff;"></div>
<div style="left:663px;top:81px;width:1px;height:17px;background:#a0a0a0;"></div>
<div style="left:664px;top:81px;width:1px;height:17px;background:#696969;"></div>
<div style="left:667px;top:81px;width:92px;height:1px;background:#fff;"></div>
<div style="left:666px;top:82px;width:1px;height:17px;background:#fff;"></div>
<div style="left:759px;top:81px;width:1px;height:17px;background:#a0a0a0;"></div>
<div style="left:760px;top:81px;width:1px;height:17px;background:#696969;"></div>
<svg style="left:493px;top:64px;" width="8" height="15" viewBox="0 0 8 15" shape-rendering="crispEdges"><path d="M1 0h2v1h-2zM0 1h1v1h-1zM3 1h2v1h-2zM0 2h1v1h-1zM5 2h1v1h-1zM0 3h1v1h-1zM6 3h1v1h-1zM0 4h1v1h-1zM7 4h1v1h-1zM0 5h1v1h-1zM7 5h1v1h-1zM0 6h1v1h-1zM7 6h1v1h-1zM0 7h1v1h-1zM7 7h1v1h-1zM0 8h1v1h-1zM7 8h1v1h-1zM0 9h1v1h-1zM7 9h1v1h-1zM0 10h1v1h-1zM7 10h1v1h-1zM0 11h1v1h-1zM6 11h1v1h-1zM0 12h1v1h-1zM5 12h1v1h-1zM0 13h1v1h-1zM3 13h2v1h-2zM1 14h2v1h-2z" fill="#000"/><path d="M1 1h2v1h-2zM1 2h4v1h-4zM1 3h1v1h-1zM3 3h3v1h-3zM1 4h3v1h-3zM5 4h2v1h-2zM1 5h1v1h-1zM3 5h4v1h-4zM1 6h3v1h-3zM5 6h2v1h-2zM1 7h1v1h-1zM3 7h4v1h-4zM1 8h3v1h-3zM5 8h2v1h-2zM1 9h1v1h-1zM3 9h4v1h-4zM1 10h3v1h-3zM5 10h2v1h-2zM1 11h1v1h-1zM3 11h3v1h-3zM1 12h4v1h-4zM1 13h2v1h-2z" fill="#fff"/><path d="M2 3h1v1h-1zM4 4h1v1h-1zM2 5h1v1h-1zM4 6h1v1h-1zM2 7h1v1h-1zM4 8h1v1h-1zM2 9h1v1h-1zM4 10h1v1h-1zM2 11h1v1h-1z" fill="#808000"/></svg>
<span class="t" style="top:67px;font-size:11px;transform:scaleX(0.9234);left:510px;">BNCMale (7)</span>
<svg style="left:586px;top:64px;" width="8" height="15" viewBox="0 0 8 15" shape-rendering="crispEdges"><path d="M1 0h2v1h-2zM0 1h1v1h-1zM3 1h2v1h-2zM0 2h1v1h-1zM5 2h1v1h-1zM0 3h1v1h-1zM6 3h1v1h-1zM0 4h1v1h-1zM7 4h1v1h-1zM0 5h1v1h-1zM7 5h1v1h-1zM0 6h1v1h-1zM7 6h1v1h-1zM0 7h1v1h-1zM7 7h1v1h-1zM0 8h1v1h-1zM7 8h1v1h-1zM0 9h1v1h-1zM7 9h1v1h-1zM0 10h1v1h-1zM7 10h1v1h-1zM0 11h1v1h-1zM6 11h1v1h-1zM0 12h1v1h-1zM5 12h1v1h-1zM0 13h1v1h-1zM3 13h2v1h-2zM1 14h2v1h-2z" fill="#000"/><path d="M1 1h2v1h-2zM1 2h4v1h-4zM1 3h1v1h-1zM3 3h3v1h-3zM1 4h3v1h-3zM5 4h2v1h-2zM1 5h1v1h-1zM3 5h4v1h-4zM1 6h3v1h-3zM5 6h2v1h-2zM1 7h1v1h-1zM3 7h4v1h-4zM1 8h3v1h-3zM5 8h2v1h-2zM1 9h1v1h-1zM3 9h4v1h-4zM1 10h3v1h-3zM5 10h2v1h-2zM1 11h1v1h-1zM3 11h3v1h-3zM1 12h4v1h-4zM1 13h2v1h-2z" fill="#fff"/><path d="M2 3h1v1h-1zM4 4h1v1h-1zM2 5h1v1h-1zM4 6h1v1h-1zM2 7h1v1h-1zM4 8h1v1h-1zM2 9h1v1h-1zM4 10h1v1h-1zM2 11h1v1h-1z" fill="#808000"/></svg>
<span class="t" style="top:67px;font-size:11px;transform:scaleX(0.9315);left:603px;">BNC-DualMale (7)</span>
<svg style="left:576px;top:82px;" width="8" height="15" viewBox="0 0 8 15" shape-rendering="crispEdges"><path d="M1 0h2v1h-2zM0 1h1v1h-1zM3 1h2v1h-2zM0 2h1v1h-1zM5 2h1v1h-1zM0 3h1v1h-1zM6 3h1v1h-1zM0 4h1v1h-1zM7 4h1v1h-1zM0 5h1v1h-1zM7 5h1v1h-1zM0 6h1v1h-1zM7 6h1v1h-1zM0 7h1v1h-1zM7 7h1v1h-1zM0 8h1v1h-1zM7 8h1v1h-1zM0 9h1v1h-1zM7 9h1v1h-1zM0 10h1v1h-1zM7 10h1v1h-1zM0 11h1v1h-1zM6 11h1v1h-1zM0 12h1v1h-1zM5 12h1v1h-1zM0 13h1v1h-1zM3 13h2v1h-2zM1 14h2v1h-2z" fill="#000"/><path d="M1 1h2v1h-2zM1 2h4v1h-4zM1 3h1v1h-1zM3 3h3v1h-3zM1 4h3v1h-3zM5 4h2v1h-2zM1 5h1v1h-1zM3 5h4v1h-4zM1 6h3v1h-3zM5 6h2v1h-2zM1 7h1v1h-1zM3 7h4v1h-4zM1 8h3v1h-3zM5 8h2v1h-2zM1 9h1v1h-1zM3 9h4v1h-4zM1 10h3v1h-3zM5 10h2v1h-2zM1 11h1v1h-1zM3 11h3v1h-3zM1 12h4v1h-4zM1 13h2v1h-2z" fill="#fff"/><path d="M2 3h1v1h-1zM4 4h1v1h-1zM2 5h1v1h-1zM4 6h1v1h-1zM2 7h1v1h-1zM4 8h1v1h-1zM2 9h1v1h-1zM4 10h1v1h-1zM2 11h1v1h-1z" fill="#808000"/></svg>
<span class="t" style="top:85px;font-size:11px;transform:scaleX(0.9450);left:593px;">CN50Male (1)</span>
<svg style="left:675px;top:82px;" width="8" height="15" viewBox="0 0 8 15" shape-rendering="crispEdges"><path d="M1 0h2v1h-2zM0 1h1v1h-1zM3 1h2v1h-2zM0 2h1v1h-1zM5 2h1v1h-1zM0 3h1v1h-1zM6 3h1v1h-1zM0 4h1v1h-1zM7 4h1v1h-1zM0 5h1v1h-1zM7 5h1v1h-1zM0 6h1v1h-1zM7 6h1v1h-1zM0 7h1v1h-1zM7 7h1v1h-1zM0 8h1v1h-1zM7 8h1v1h-1zM0 9h1v1h-1zM7 9h1v1h-1zM0 10h1v1h-1zM7 10h1v1h-1zM0 11h1v1h-1zM6 11h1v1h-1zM0 12h1v1h-1zM5 12h1v1h-1zM0 13h1v1h-1zM3 13h2v1h-2zM1 14h2v1h-2z" fill="#000"/><path d="M1 1h2v1h-2zM1 2h4v1h-4zM1 3h1v1h-1zM3 3h3v1h-3zM1 4h3v1h-3zM5 4h2v1h-2zM1 5h1v1h-1zM3 5h4v1h-4zM1 6h3v1h-3zM5 6h2v1h-2zM1 7h1v1h-1zM3 7h4v1h-4zM1 8h3v1h-3zM5 8h2v1h-2zM1 9h1v1h-1zM3 9h4v1h-4zM1 10h3v1h-3zM5 10h2v1h-2zM1 11h1v1h-1zM3 11h3v1h-3zM1 12h4v1h-4zM1 13h2v1h-2z" fill="#fff"/><path d="M2 3h1v1h-1zM4 4h1v1h-1zM2 5h1v1h-1zM4 6h1v1h-1zM2 7h1v1h-1zM4 8h1v1h-1zM2 9h1v1h-1zM4 10h1v1h-1zM2 11h1v1h-1z" fill="#808000"/></svg>
<span class="t" style="top:85px;font-size:11px;transform:scaleX(0.9434);left:692px;">CN50Female (2)</span>
<svg style="left:704px;top:64px;" width="8" height="15" viewBox="0 0 8 15" shape-rendering="crispEdges"><path d="M1 0h2v1h-2zM0 1h1v1h-1zM3 1h2v1h-2zM0 2h1v1h-1zM5 2h1v1h-1zM0 3h1v1h-1zM6 3h1v1h-1zM0 4h1v1h-1zM7 4h1v1h-1zM0 5h1v1h-1zM7 5h1v1h-1zM0 6h1v1h-1zM7 6h1v1h-1zM0 7h1v1h-1zM7 7h1v1h-1zM0 8h1v1h-1zM7 8h1v1h-1zM0 9h1v1h-1zM7 9h1v1h-1zM0 10h1v1h-1zM7 10h1v1h-1zM0 11h1v1h-1zM6 11h1v1h-1zM0 12h1v1h-1zM5 12h1v1h-1zM0 13h1v1h-1zM3 13h2v1h-2zM1 14h2v1h-2z" fill="#000"/><path d="M1 1h2v1h-2zM1 2h4v1h-4zM1 3h1v1h-1zM3 3h3v1h-3zM1 4h3v1h-3zM5 4h2v1h-2zM1 5h1v1h-1zM3 5h4v1h-4zM1 6h3v1h-3zM5 6h2v1h-2zM1 7h1v1h-1zM3 7h4v1h-4zM1 8h3v1h-3zM5 8h2v1h-2zM1 9h1v1h-1zM3 9h4v1h-4zM1 10h3v1h-3zM5 10h2v1h-2zM1 11h1v1h-1zM3 11h3v1h-3zM1 12h4v1h-4zM1 13h2v1h-2z" fill="#fff"/><path d="M2 3h1v1h-1zM4 4h1v1h-1zM2 5h1v1h-1zM4 6h1v1h-1zM2 7h1v1h-1zM4 8h1v1h-1zM2 9h1v1h-1zM4 10h1v1h-1zM2 11h1v1h-1z" fill="#808000"/></svg>
<svg style="left:489px;top:82px;" width="16" height="15" viewBox="0 0 16 15" shape-rendering="crispEdges"><path d="M5 0h1v1h-1zM4 1h1v1h-1zM6 1h1v1h-1zM4 2h1v1h-1zM6 2h1v1h-1zM3 3h1v1h-1zM7 3h1v1h-1zM3 4h1v1h-1zM7 4h1v1h-1zM2 5h1v1h-1zM8 5h1v1h-1zM2 6h1v1h-1zM8 6h1v1h-1zM1 7h1v1h-1zM9 7h1v1h-1zM1 8h1v1h-1zM9 8h1v1h-1zM0 9h1v1h-1zM10 9h1v1h-1zM0 10h1v1h-1zM10 10h1v1h-1zM0 11h11v1h-11z" fill="#000000"/><path d="M1 1h3v1h-3zM7 1h8v1h-8zM1 2h3v1h-3zM7 2h8v1h-8zM1 3h2v1h-2zM8 3h2v1h-2zM13 3h2v1h-2zM1 4h2v1h-2zM8 4h1v1h-1zM14 4h1v1h-1zM1 5h1v1h-1zM14 5h1v1h-1zM1 6h1v1h-1zM14 6h1v1h-1zM14 7h1v1h-1zM14 8h1v1h-1zM14 9h1v1h-1zM13 10h2v1h-2zM11 11h4v1h-4zM1 12h2v1h-2zM4 12h1v1h-1zM6 12h1v1h-1zM8 12h1v1h-1zM10 12h1v1h-1zM12 12h1v1h-1zM14 12h1v1h-1zM1 13h1v1h-1zM3 13h1v1h-1zM5 13h1v1h-1zM7 13h1v1h-1zM9 13h1v1h-1zM11 13h1v1h-1zM13 13h2v1h-2zM1 14h14v1h-14z" fill="#808080"/><path d="M5 1h1v1h-1zM5 2h1v1h-1zM4 3h3v1h-3zM4 4h1v1h-1zM6 4h1v1h-1zM3 5h2v1h-2zM6 5h2v1h-2zM3 6h2v1h-2zM6 6h2v1h-2zM2 7h3v1h-3zM6 7h3v1h-3zM2 8h7v1h-7zM1 9h4v1h-4zM6 9h4v1h-4zM1 10h9v1h-9z" fill="#ffff00"/><path d="M10 3h1v1h-1zM12 3h1v1h-1zM9 4h1v1h-1zM11 4h1v1h-1zM13 4h1v1h-1zM10 5h1v1h-1zM12 5h1v1h-1zM9 6h1v1h-1zM11 6h1v1h-1zM13 6h1v1h-1zM10 7h1v1h-1zM12 7h1v1h-1zM11 8h1v1h-1zM13 8h1v1h-1zM12 9h1v1h-1zM11 10h1v1h-1zM3 12h1v1h-1zM5 12h1v1h-1zM7 12h1v1h-1zM9 12h1v1h-1zM11 12h1v1h-1zM13 12h1v1h-1zM2 13h1v1h-1zM4 13h1v1h-1zM6 13h1v1h-1zM8 13h1v1h-1zM10 13h1v1h-1zM12 13h1v1h-1z" fill="#ffffff"/><path d="M11 3h1v1h-1zM10 4h1v1h-1zM12 4h1v1h-1zM9 5h1v1h-1zM11 5h1v1h-1zM13 5h1v1h-1zM10 6h1v1h-1zM12 6h1v1h-1zM11 7h1v1h-1zM13 7h1v1h-1zM10 8h1v1h-1zM12 8h1v1h-1zM11 9h1v1h-1zM13 9h1v1h-1zM12 10h1v1h-1z" fill="#00ffff"/><path d="M5 4h1v1h-1zM5 5h1v1h-1zM5 6h1v1h-1zM5 7h1v1h-1zM5 9h1v1h-1z" fill="#ff0000"/></svg>
<span class="t" style="top:85px;font-size:11px;transform:scaleX(0.9714);left:510px;">Properties</span>
<div style="left:481px;top:98px;width:230px;height:1px;background:#fff;"></div>
<div style="left:481px;top:21px;width:1px;height:500px;background:#fff;"></div>
<div style="left:481px;top:21px;width:230px;height:1px;background:#fff;"></div>
<div style="left:488px;top:110px;width:1px;height:65px;background:#a0a0a0;"></div>
<div style="left:489px;top:111px;width:1px;height:64px;background:#fff;"></div>
<div style="left:720px;top:110px;width:1px;height:65px;background:#a0a0a0;"></div>
<div style="left:721px;top:110px;width:1px;height:66px;background:#fff;"></div>
<div style="left:488px;top:174px;width:233px;height:1px;background:#a0a0a0;"></div>
<div style="left:488px;top:175px;width:234px;height:1px;background:#fff;"></div>
<div style="left:488px;top:110px;width:7px;height:1px;background:#a0a0a0;"></div>
<div style="left:489px;top:111px;width:6px;height:1px;background:#fff;"></div>
<div style="left:562px;top:110px;width:159px;height:1px;background:#a0a0a0;"></div>
<div style="left:562px;top:111px;width:158px;height:1px;background:#fff;"></div>
<span class="t" style="top:106px;font-size:11px;transform:scaleX(1.0152);left:497px;">Identification</span>
<span class="t" style="top:125px;font-size:11px;transform:scaleX(0.9902);left:516px;">Connector Type</span>
<span class="t" style="top:149px;font-size:11px;transform:scaleX(0.9304);left:529px;">Display Name</span>
<div style="left:598px;top:120px;width:97px;height:20px;background:#f0f0f0;box-shadow:inset 1px 1px 0 #a0a0a0, inset -1px -1px 0 #fff;"></div>
<span class="t" style="top:123px;font-size:11px;transform:scaleX(0.9174);left:599px;">DB15 Female</span>
<div class="sunk" style="left:598px;top:144px;width:97px;height:20px;background:#f0f0f0;"></div>
<div class="sunk" style="left:485px;top:177px;width:240px;height:345px;background:#f0f0f0;"></div>
<div style="left:487px;top:179px;width:39px;height:25px;background:#f0f0f0;box-shadow:inset 1px 1px 0 #fff;"></div>
<div style="left:526px;top:179px;width:1px;height:26px;background:#727272;"></div>
<div style="left:527px;top:179px;width:79px;height:25px;background:#f0f0f0;box-shadow:inset 1px 1px 0 #fff;"></div>
<div style="left:606px;top:179px;width:1px;height:26px;background:#727272;"></div>
<div style="left:607px;top:179px;width:79px;height:25px;background:#f0f0f0;box-shadow:inset 1px 1px 0 #fff;"></div>
<div style="left:686px;top:179px;width:1px;height:26px;background:#727272;"></div>
<div style="left:687px;top:179px;width:79px;height:25px;background:#f0f0f0;box-shadow:inset 1px 1px 0 #fff;"></div>
<div style="left:766px;top:179px;width:1px;height:26px;background:#727272;"></div>
<div style="left:487px;top:204px;width:230px;height:1px;background:#727272;"></div>
<span class="t" style="top:181px;font-size:11px;font-weight:bold;transform:scaleX(1.1021);left:543.55px;">Relative</span>
<span class="t" style="top:194px;font-size:11px;font-weight:bold;transform:scaleX(1.0736);left:547.55px;">Test Pt</span>
<span class="t" style="top:181px;font-size:11px;font-weight:bold;transform:scaleX(1.0307);left:622.55px;">Absolute</span>
<span class="t" style="top:194px;font-size:11px;font-weight:bold;transform:scaleX(1.0736);left:627.55px;">Test Pt</span>
<div style="left:487px;top:205px;width:39px;height:271px;background:#f0f0f0;"></div>
<div style="left:527px;top:205px;width:79px;height:271px;background:#fff;"></div>
<div style="left:607px;top:205px;width:79px;height:271px;background:#c0c0c0;"></div>
<div style="left:687px;top:205px;width:30px;height:271px;background:#fff;"></div>
<div style="left:687px;top:461px;width:30px;height:15px;background:#c0c0c0;"></div>
<div style="left:487px;top:205px;width:1px;height:271px;background:#fff;"></div>
<div style="left:526px;top:205px;width:1px;height:272px;background:#727272;"></div>
<div style="left:606px;top:205px;width:1px;height:272px;background:#727272;"></div>
<div style="left:686px;top:205px;width:1px;height:272px;background:#727272;"></div>
<div style="left:487px;top:220px;width:230px;height:1px;background:#727272;"></div>
<div style="left:487px;top:205px;width:39px;height:1px;background:#fff;"></div>
<span class="t" style="top:207px;font-size:12px;transform:scaleX(0.8398);left:509.40px;">SH</span>
<span class="t" style="top:207px;font-size:12px;transform:scaleX(0.9300);left:560.39px;">57</span>
<span class="t" style="top:207px;font-size:12px;transform:scaleX(0.9300);left:640.39px;">57</span>
<div style="left:487px;top:236px;width:230px;height:1px;background:#727272;"></div>
<div style="left:487px;top:221px;width:39px;height:1px;background:#fff;"></div>
<span class="t" style="top:223px;font-size:12px;transform:scaleX(0.9300);left:517.19px;">1</span>
<span class="t" style="top:223px;font-size:12px;transform:scaleX(0.9300);left:560.39px;">58</span>
<span class="t" style="top:223px;font-size:12px;transform:scaleX(0.9300);left:640.39px;">58</span>
<div style="left:487px;top:252px;width:230px;height:1px;background:#727272;"></div>
<div style="left:487px;top:237px;width:39px;height:1px;background:#fff;"></div>
<span class="t" style="top:239px;font-size:12px;transform:scaleX(0.9300);left:517.19px;">2</span>
<span class="t" style="top:239px;font-size:12px;transform:scaleX(0.9300);left:563.50px;">2</span>
<span class="t" style="top:239px;font-size:12px;transform:scaleX(0.9300);left:643.50px;">2</span>
<div style="left:487px;top:268px;width:230px;height:1px;background:#727272;"></div>
<div style="left:487px;top:253px;width:39px;height:1px;background:#fff;"></div>
<span class="t" style="top:255px;font-size:12px;transform:scaleX(0.9300);left:517.19px;">3</span>
<span class="t" style="top:255px;font-size:12px;transform:scaleX(0.9300);left:563.50px;">4</span>
<span class="t" style="top:255px;font-size:12px;transform:scaleX(0.9300);left:643.50px;">4</span>
<div style="left:487px;top:284px;width:230px;height:1px;background:#727272;"></div>
<div style="left:487px;top:269px;width:39px;height:1px;background:#fff;"></div>
<span class="t" style="top:271px;font-size:12px;transform:scaleX(0.9300);left:517.19px;">4</span>
<span class="t" style="top:271px;font-size:12px;transform:scaleX(0.9300);left:563.50px;">6</span>
<span class="t" style="top:271px;font-size:12px;transform:scaleX(0.9300);left:643.50px;">6</span>
<div style="left:487px;top:300px;width:230px;height:1px;background:#727272;"></div>
<div style="left:487px;top:285px;width:39px;height:1px;background:#fff;"></div>
<span class="t" style="top:287px;font-size:12px;transform:scaleX(0.9300);left:517.19px;">5</span>
<span class="t" style="top:287px;font-size:12px;transform:scaleX(0.9300);left:563.50px;">8</span>
<span class="t" style="top:287px;font-size:12px;transform:scaleX(0.9300);left:643.50px;">8</span>
<div style="left:487px;top:316px;width:230px;height:1px;background:#727272;"></div>
<div style="left:487px;top:301px;width:39px;height:1px;background:#fff;"></div>
<span class="t" style="top:303px;font-size:12px;transform:scaleX(0.9300);left:517.19px;">6</span>
<span class="t" style="top:303px;font-size:12px;transform:scaleX(0.9300);left:560.39px;">10</span>
<span class="t" style="top:303px;font-size:12px;transform:scaleX(0.9300);left:640.39px;">10</span>
<div style="left:487px;top:332px;width:230px;height:1px;background:#727272;"></div>
<div style="left:487px;top:317px;width:39px;height:1px;background:#fff;"></div>
<span class="t" style="top:319px;font-size:12px;transform:scaleX(0.9300);left:517.19px;">7</span>
<span class="t" style="top:319px;font-size:12px;transform:scaleX(0.9300);left:560.39px;">12</span>
<span class="t" style="top:319px;font-size:12px;transform:scaleX(0.9300);left:640.39px;">12</span>
<div style="left:487px;top:348px;width:230px;height:1px;background:#727272;"></div>
<div style="left:487px;top:333px;width:39px;height:1px;background:#fff;"></div>
<span class="t" style="top:335px;font-size:12px;transform:scaleX(0.9300);left:517.19px;">8</span>
<span class="t" style="top:335px;font-size:12px;transform:scaleX(0.9300);left:560.39px;">14</span>
<span class="t" style="top:335px;font-size:12px;transform:scaleX(0.9300);left:640.39px;">14</span>
<div style="left:487px;top:364px;width:230px;height:1px;background:#727272;"></div>
<div style="left:487px;top:349px;width:39px;height:1px;background:#fff;"></div>
<span class="t" style="top:351px;font-size:12px;transform:scaleX(0.9300);left:517.19px;">9</span>
<span class="t" style="top:351px;font-size:12px;transform:scaleX(0.9300);left:563.50px;">1</span>
<span class="t" style="top:351px;font-size:12px;transform:scaleX(0.9300);left:643.50px;">1</span>
<div style="left:487px;top:380px;width:230px;height:1px;background:#727272;"></div>
<div style="left:487px;top:365px;width:39px;height:1px;background:#fff;"></div>
<span class="t" style="top:367px;font-size:12px;transform:scaleX(0.9300);left:510.99px;">10</span>
<span class="t" style="top:367px;font-size:12px;transform:scaleX(0.9300);left:563.50px;">3</span>
<span class="t" style="top:367px;font-size:12px;transform:scaleX(0.9300);left:643.50px;">3</span>
<div style="left:487px;top:396px;width:230px;height:1px;background:#727272;"></div>
<div style="left:487px;top:381px;width:39px;height:1px;background:#fff;"></div>
<span class="t" style="top:383px;font-size:12px;transform:scaleX(0.9300);left:511.81px;">11</span>
<span class="t" style="top:383px;font-size:12px;transform:scaleX(0.9300);left:563.50px;">5</span>
<span class="t" style="top:383px;font-size:12px;transform:scaleX(0.9300);left:643.50px;">5</span>
<div style="left:487px;top:412px;width:230px;height:1px;background:#727272;"></div>
<div style="left:487px;top:397px;width:39px;height:1px;background:#fff;"></div>
<span class="t" style="top:399px;font-size:12px;transform:scaleX(0.9300);left:510.99px;">12</span>
<span class="t" style="top:399px;font-size:12px;transform:scaleX(0.9300);left:563.50px;">7</span>
<span class="t" style="top:399px;font-size:12px;transform:scaleX(0.9300);left:643.50px;">7</span>
<div style="left:487px;top:428px;width:230px;height:1px;background:#727272;"></div>
<div style="left:487px;top:413px;width:39px;height:1px;background:#fff;"></div>
<span class="t" style="top:415px;font-size:12px;transform:scaleX(0.9300);left:510.99px;">13</span>
<span class="t" style="top:415px;font-size:12px;transform:scaleX(0.9300);left:563.50px;">9</span>
<span class="t" style="top:415px;font-size:12px;transform:scaleX(0.9300);left:643.50px;">9</span>
<div style="left:487px;top:444px;width:230px;height:1px;background:#727272;"></div>
<div style="left:487px;top:429px;width:39px;height:1px;background:#fff;"></div>
<span class="t" style="top:431px;font-size:12px;transform:scaleX(0.9300);left:510.99px;">14</span>
<span class="t" style="top:431px;font-size:12px;transform:scaleX(0.9300);left:560.81px;">11</span>
<span class="t" style="top:431px;font-size:12px;transform:scaleX(0.9300);left:640.81px;">11</span>
<div style="left:487px;top:460px;width:230px;height:1px;background:#727272;"></div>
<div style="left:487px;top:445px;width:39px;height:1px;background:#fff;"></div>
<span class="t" style="top:447px;font-size:12px;transform:scaleX(0.9300);left:510.99px;">15</span>
<span class="t" style="top:447px;font-size:12px;transform:scaleX(0.9300);left:560.39px;">13</span>
<span class="t" style="top:447px;font-size:12px;transform:scaleX(0.9300);left:640.39px;">13</span>
<div style="left:487px;top:476px;width:230px;height:1px;background:#727272;"></div>
<div style="left:487px;top:461px;width:39px;height:1px;background:#fff;"></div>
<span class="t" style="top:463px;font-size:12px;transform:scaleX(0.8267);left:504.10px;">LED</span>
<span class="t" style="top:463px;font-size:12px;transform:scaleX(0.8770);left:562.80px;">U</span>
<span class="t" style="top:463px;font-size:12px;transform:scaleX(0.8770);left:642.80px;">U</span>
</body></html>
